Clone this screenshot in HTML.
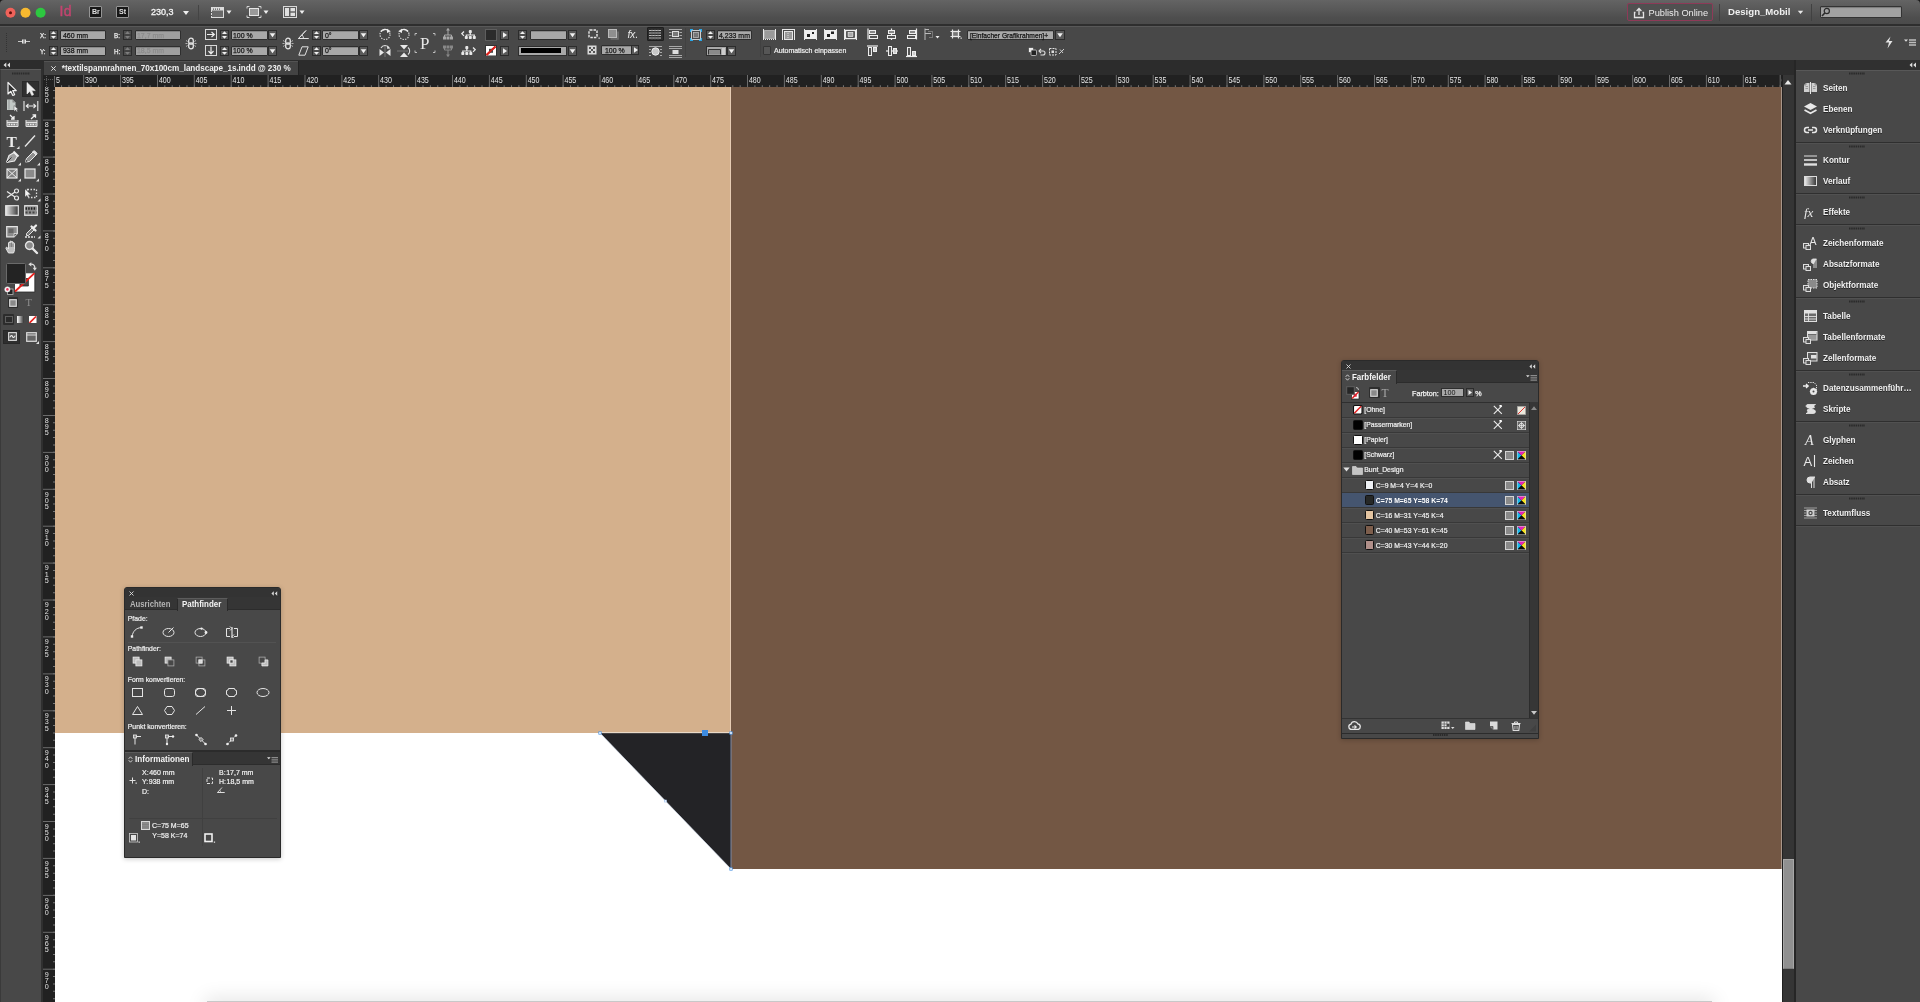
<!DOCTYPE html>
<html lang="de"><head><meta charset="utf-8"><title>InDesign</title>
<style>
html,body{margin:0;padding:0}
body{width:1920px;height:1002px;overflow:hidden;background:#fff;position:relative;font-family:"Liberation Sans",sans-serif;}
div,svg{position:absolute;box-sizing:border-box}
#root{left:0;top:0;width:1920px;height:1002px;will-change:transform}
.t{white-space:nowrap;line-height:1}
</style></head>
<body>
<div id="root">
<div style="left:55px;top:87px;width:676px;height:646px;background:#d4b08c"></div>
<div style="left:731px;top:87px;width:1050px;height:782px;background:#735744"></div>
<div style="left:730.2px;top:87px;width:0.9px;height:646px;background:#e6ccb4"></div>
<div style="left:1781px;top:87px;width:1px;height:782px;background:#a9968a"></div>
<svg style="left:590px;top:725px;" width="150" height="155" viewBox="0 0 150 155"><polygon points="10,8 141,8 141,144" fill="#232326"/><path d="M10 7.7H141" stroke="#f2e8de" stroke-width="0.9"/><path d="M141 8V144" stroke="#7d8aa6" stroke-width="1"/><line x1="10" y1="8" x2="141" y2="144" stroke="#dbe8f8" stroke-width="0.6"/><rect x="112" y="5" width="6" height="6" fill="#3d8be0"/><rect x="8.8" y="6.8" width="2.4" height="2.4" fill="#fff" stroke="#3d8be0" stroke-width="0.7"/><rect x="139.8" y="6.8" width="2.4" height="2.4" fill="#fff" stroke="#3d8be0" stroke-width="0.7"/><rect x="139.8" y="142.8" width="2.4" height="2.4" fill="#fff" stroke="#3d8be0" stroke-width="0.7"/><rect x="74.5" y="75" width="2" height="2" fill="#fff" stroke="#9dc0ee" stroke-width="0.6"/></svg>
<div style="left:207px;top:1001px;width:1505px;height:12px;background:#c8c8c8;box-shadow:0 0 20px 2px rgba(0,0,0,.12)"></div>
<div style="left:0px;top:58.5px;width:1920px;height:2px;background:#3c3c3c"></div>
<div style="left:0px;top:60.3px;width:1920px;height:15px;background:#2c2c2c"></div>
<div style="left:42px;top:75px;width:1740px;height:12.2px;background:#212121"></div>
<div style="left:42px;top:75px;width:13px;height:927px;background:#212121"></div>
<svg style="left:0;top:75px" width="1782" height="12" viewBox="0 0 1782 12"><defs><clipPath id="hc"><rect x="56" y="0" width="1726" height="12"/></clipPath></defs><path d="M31.57 11.2H1782" stroke="#787878" stroke-width="2" stroke-dasharray="1 6.376" clip-path="url(#hc)"/><path d="M83.7 0V12M120.6 0V12M157.5 0V12M194.3 0V12M231.2 0V12M268.1 0V12M305 0V12M341.9 0V12M378.7 0V12M415.6 0V12M452.5 0V12M489.4 0V12M526.3 0V12M563.1 0V12M600 0V12M636.9 0V12M673.8 0V12M710.7 0V12M747.5 0V12M784.4 0V12M821.3 0V12M858.2 0V12M895.1 0V12M931.9 0V12M968.8 0V12M1005.7 0V12M1042.6 0V12M1079.5 0V12M1116.3 0V12M1153.2 0V12M1190.1 0V12M1227 0V12M1263.9 0V12M1300.7 0V12M1337.6 0V12M1374.5 0V12M1411.4 0V12M1448.3 0V12M1485.1 0V12M1522 0V12M1558.9 0V12M1595.8 0V12M1632.7 0V12M1669.5 0V12M1706.4 0V12M1743.3 0V12M1780.2 0V12" stroke="#6c6c6c" stroke-width="1"/><g font-family="Liberation Sans, sans-serif" font-size="8.3" fill="#e4e4e4"><text x="85.1" y="8" textLength="11.8" lengthAdjust="spacingAndGlyphs">390</text><text x="122" y="8" textLength="11.8" lengthAdjust="spacingAndGlyphs">395</text><text x="158.9" y="8" textLength="11.8" lengthAdjust="spacingAndGlyphs">400</text><text x="195.7" y="8" textLength="11.8" lengthAdjust="spacingAndGlyphs">405</text><text x="232.6" y="8" textLength="11.8" lengthAdjust="spacingAndGlyphs">410</text><text x="269.5" y="8" textLength="11.8" lengthAdjust="spacingAndGlyphs">415</text><text x="306.4" y="8" textLength="11.8" lengthAdjust="spacingAndGlyphs">420</text><text x="343.3" y="8" textLength="11.8" lengthAdjust="spacingAndGlyphs">425</text><text x="380.1" y="8" textLength="11.8" lengthAdjust="spacingAndGlyphs">430</text><text x="417" y="8" textLength="11.8" lengthAdjust="spacingAndGlyphs">435</text><text x="453.9" y="8" textLength="11.8" lengthAdjust="spacingAndGlyphs">440</text><text x="490.8" y="8" textLength="11.8" lengthAdjust="spacingAndGlyphs">445</text><text x="527.7" y="8" textLength="11.8" lengthAdjust="spacingAndGlyphs">450</text><text x="564.5" y="8" textLength="11.8" lengthAdjust="spacingAndGlyphs">455</text><text x="601.4" y="8" textLength="11.8" lengthAdjust="spacingAndGlyphs">460</text><text x="638.3" y="8" textLength="11.8" lengthAdjust="spacingAndGlyphs">465</text><text x="675.2" y="8" textLength="11.8" lengthAdjust="spacingAndGlyphs">470</text><text x="712.1" y="8" textLength="11.8" lengthAdjust="spacingAndGlyphs">475</text><text x="748.9" y="8" textLength="11.8" lengthAdjust="spacingAndGlyphs">480</text><text x="785.8" y="8" textLength="11.8" lengthAdjust="spacingAndGlyphs">485</text><text x="822.7" y="8" textLength="11.8" lengthAdjust="spacingAndGlyphs">490</text><text x="859.6" y="8" textLength="11.8" lengthAdjust="spacingAndGlyphs">495</text><text x="896.5" y="8" textLength="11.8" lengthAdjust="spacingAndGlyphs">500</text><text x="933.3" y="8" textLength="11.8" lengthAdjust="spacingAndGlyphs">505</text><text x="970.2" y="8" textLength="11.8" lengthAdjust="spacingAndGlyphs">510</text><text x="1007.1" y="8" textLength="11.8" lengthAdjust="spacingAndGlyphs">515</text><text x="1044" y="8" textLength="11.8" lengthAdjust="spacingAndGlyphs">520</text><text x="1080.9" y="8" textLength="11.8" lengthAdjust="spacingAndGlyphs">525</text><text x="1117.7" y="8" textLength="11.8" lengthAdjust="spacingAndGlyphs">530</text><text x="1154.6" y="8" textLength="11.8" lengthAdjust="spacingAndGlyphs">535</text><text x="1191.5" y="8" textLength="11.8" lengthAdjust="spacingAndGlyphs">540</text><text x="1228.4" y="8" textLength="11.8" lengthAdjust="spacingAndGlyphs">545</text><text x="1265.3" y="8" textLength="11.8" lengthAdjust="spacingAndGlyphs">550</text><text x="1302.1" y="8" textLength="11.8" lengthAdjust="spacingAndGlyphs">555</text><text x="1339" y="8" textLength="11.8" lengthAdjust="spacingAndGlyphs">560</text><text x="1375.9" y="8" textLength="11.8" lengthAdjust="spacingAndGlyphs">565</text><text x="1412.8" y="8" textLength="11.8" lengthAdjust="spacingAndGlyphs">570</text><text x="1449.7" y="8" textLength="11.8" lengthAdjust="spacingAndGlyphs">575</text><text x="1486.5" y="8" textLength="11.8" lengthAdjust="spacingAndGlyphs">580</text><text x="1523.4" y="8" textLength="11.8" lengthAdjust="spacingAndGlyphs">585</text><text x="1560.3" y="8" textLength="11.8" lengthAdjust="spacingAndGlyphs">590</text><text x="1597.2" y="8" textLength="11.8" lengthAdjust="spacingAndGlyphs">595</text><text x="1634.1" y="8" textLength="11.8" lengthAdjust="spacingAndGlyphs">600</text><text x="1670.9" y="8" textLength="11.8" lengthAdjust="spacingAndGlyphs">605</text><text x="1707.8" y="8" textLength="11.8" lengthAdjust="spacingAndGlyphs">610</text><text x="1744.7" y="8" textLength="11.8" lengthAdjust="spacingAndGlyphs">615</text><text x="1781.6" y="8" textLength="11.8" lengthAdjust="spacingAndGlyphs">620</text><text x="48.2" y="8" textLength="11.8" lengthAdjust="spacingAndGlyphs" clip-path="url(#hc)">385</text></g></svg>
<svg style="left:42px;top:0" width="13" height="1002" viewBox="0 0 13 1002"><defs><clipPath id="vc"><rect x="0" y="87" width="13" height="915"/></clipPath></defs><g clip-path="url(#vc)"><path d="M12 67.95V1002" stroke="#787878" stroke-width="2" stroke-dasharray="1 6.383"/><path d="M0 83.2H13M0 120.1H13M0 157.1H13M0 194H13M0 230.9H13M0 267.8H13M0 304.7H13M0 341.6H13M0 378.5H13M0 415.5H13M0 452.4H13M0 489.3H13M0 526.2H13M0 563.1H13M0 600H13M0 636.9H13M0 673.9H13M0 710.8H13M0 747.7H13M0 784.6H13M0 821.5H13M0 858.4H13M0 895.4H13M0 932.3H13M0 969.2H13" stroke="#6c6c6c" stroke-width="1"/><g font-family="Liberation Sans, sans-serif" font-size="7.2" fill="#e0e0e0" text-anchor="middle"><text x="4.8 4.8 4.8" y="90.5 96.8 103">850</text><text x="4.8 4.8 4.8" y="127.4 133.7 139.9">855</text><text x="4.8 4.8 4.8" y="164.4 170.6 176.9">860</text><text x="4.8 4.8 4.8" y="201.3 207.5 213.8">865</text><text x="4.8 4.8 4.8" y="238.2 244.4 250.7">870</text><text x="4.8 4.8 4.8" y="275.1 281.3 287.6">875</text><text x="4.8 4.8 4.8" y="312 318.3 324.5">880</text><text x="4.8 4.8 4.8" y="348.9 355.2 361.4">885</text><text x="4.8 4.8 4.8" y="385.8 392.1 398.3">890</text><text x="4.8 4.8 4.8" y="422.8 429 435.3">895</text><text x="4.8 4.8 4.8" y="459.7 465.9 472.2">900</text><text x="4.8 4.8 4.8" y="496.6 502.8 509.1">905</text><text x="4.8 4.8 4.8" y="533.5 539.8 546">910</text><text x="4.8 4.8 4.8" y="570.4 576.7 582.9">915</text><text x="4.8 4.8 4.8" y="607.3 613.6 619.8">920</text><text x="4.8 4.8 4.8" y="644.2 650.5 656.7">925</text><text x="4.8 4.8 4.8" y="681.2 687.4 693.7">930</text><text x="4.8 4.8 4.8" y="718.1 724.3 730.6">935</text><text x="4.8 4.8 4.8" y="755 761.2 767.5">940</text><text x="4.8 4.8 4.8" y="791.9 798.2 804.4">945</text><text x="4.8 4.8 4.8" y="828.8 835.1 841.3">950</text><text x="4.8 4.8 4.8" y="865.7 872 878.2">955</text><text x="4.8 4.8 4.8" y="902.6 908.9 915.1">960</text><text x="4.8 4.8 4.8" y="939.6 945.8 952.1">965</text><text x="4.8 4.8 4.8" y="976.5 982.7 989">970</text></g></g></svg>
<div style="left:42px;top:75px;width:13px;height:12px;background:#212121"></div>
<svg style="left:42px;top:75.5px;" width="13" height="11" viewBox="0 0 13 11"><path d="M4.5 0V11M0 3.5H13" stroke="#5c5c5c" stroke-width="1" stroke-dasharray="1 1" fill="none"/><path d="M12.5 0V11" stroke="#6a6a6a" stroke-width="1"/></svg>
<div style="left:1782px;top:75px;width:12px;height:927px;background:#353535;border-left:1px solid #202020"></div>
<div style="left:1783px;top:859px;width:10.5px;height:110px;background:#909090;border:1px solid #a8a8a8;border-bottom-color:#7a7a7a"></div>
<svg style="left:1782px;top:76px;" width="12" height="12" viewBox="0 0 12 12"><polygon points="2.5,8.5 6,4 9.5,8.5" fill="#e8e8e8"/></svg>
<div style="left:1793.5px;top:60px;width:2.5px;height:942px;background:#262626"></div>
<div style="left:0px;top:0px;width:1920px;height:24.5px;background:linear-gradient(#646464 0,#606060 12%,#585858 40%,#4e4e4e 70%,#4a4a4a 100%)"></div>
<div style="left:0px;top:24.3px;width:1920px;height:1.5px;background:#2e2e2e"></div>
<svg style="left:0px;top:0px;" width="4" height="4" viewBox="0 0 4 4"><path d="M0 0H4A4 4 0 0 0 0 4Z" fill="#1a1a1a"/></svg>
<svg style="left:1916px;top:0px;" width="4" height="4" viewBox="0 0 4 4"><path d="M4 0H0A4 4 0 0 1 4 4Z" fill="#1a1a1a"/></svg>
<svg style="left:4px;top:6px;" width="44" height="14" viewBox="0 0 44 14"><circle cx="6.5" cy="6.7" r="5" fill="#f0625a"/><circle cx="6.5" cy="6.7" r="1.5" fill="#5c0e0a"/><circle cx="21.5" cy="6.7" r="5" fill="#f7b92f"/><circle cx="36.6" cy="6.7" r="5" fill="#2dc840"/></svg>
<div class="t" style="left:59.5px;top:3.5px;font-size:14px;color:#c2456f;letter-spacing:0.3px;-webkit-text-stroke:0.45px #c2456f">Id</div>
<div style="left:89px;top:6px;width:13px;height:12px;background:#171717;border:1px solid #959595;border-radius:1px"><div class="t" style="left:2.2px;top:1.3px;font-size:8px;font-weight:bold;color:#e0e0e0;transform:scaleX(.88);transform-origin:0 0">Br</div></div>
<div style="left:116px;top:6px;width:13px;height:12px;background:#171717;border:1px solid #959595;border-radius:1px"><div class="t" style="left:2.2px;top:1.3px;font-size:8px;font-weight:bold;color:#e0e0e0;transform:scaleX(.88);transform-origin:0 0">St</div></div>
<div class="t" style="left:151px;top:7.6px;font-size:9.3px;color:#f4f4f4;-webkit-text-stroke:0.3px #f4f4f4;transform:scaleX(.97);transform-origin:0 0">230,3</div>
<svg style="left:182px;top:10px;" width="8" height="6" viewBox="0 0 8 6"><polygon points="1,1 7,1 4,5" fill="#f0f0f0"/></svg>
<div style="left:198px;top:5px;width:1px;height:15px;background:#444"></div>
<svg style="left:210px;top:5px;" width="24" height="14" viewBox="0 0 24 14"><rect x="1.5" y="2.5" width="12" height="10" fill="#6a6a6a" stroke="#dcdcdc"/><rect x="2" y="3" width="11" height="2.5" fill="#dcdcdc"/><path d="M3 4.2h1M5 4.2h1M7 4.2h1M9 4.2h1" stroke="#555" stroke-width="1.2"/><path d="M1.5 7v1M1.5 10v1" stroke="#555"/><polygon points="16.5,5.5 21.5,5.5 19,9" fill="#f0f0f0"/></svg>
<svg style="left:246px;top:5px;" width="24" height="14" viewBox="0 0 24 14"><rect x="3.5" y="3.5" width="9" height="7" fill="#9a9a9a" stroke="#e4e4e4"/><path d="M1 3.5V1.5H3.5M12.5 1.5H15V3.5M15 10.5V12.5H12.5M3.5 12.5H1V10.5" stroke="#d4d4d4" fill="none"/><polygon points="17.5,5.5 22.5,5.5 20,9" fill="#f0f0f0"/></svg>
<svg style="left:282px;top:5px;" width="24" height="14" viewBox="0 0 24 14"><rect x="1.5" y="1.5" width="13" height="11" fill="#5c5c5c" stroke="#d8d8d8"/><rect x="3" y="3" width="4" height="8" fill="#e0e0e0"/><rect x="8.5" y="3" width="4.5" height="3.3" fill="#e0e0e0"/><rect x="8.5" y="7.7" width="4.5" height="3.3" fill="#e0e0e0"/><polygon points="17.5,5.5 22.5,5.5 20,9" fill="#f0f0f0"/></svg>
<div style="left:1627px;top:3px;width:86px;height:18px;border:1px solid #8e3a58;border-radius:2px;background:#505050"></div>
<svg style="left:1633px;top:6.5px;" width="12" height="12" viewBox="0 0 12 12"><path d="M2.5 5.5H1.5V10.5H10.5V5.5H9.5" fill="none" stroke="#e4e4e4" stroke-width="1.3"/><path d="M6 8V2M3.6 4L6 1.5L8.4 4" fill="none" stroke="#e4e4e4" stroke-width="1.3"/></svg>
<div class="t" style="left:1648.5px;top:8.6px;font-size:9.25px;color:#ececec;">Publish Online</div>
<div style="left:1719px;top:4px;width:1px;height:17px;background:#414141"></div>
<div class="t" style="left:1728px;top:7.3px;font-size:9.6px;color:#f0f0f0;font-weight:bold;letter-spacing:0px">Design_Mobil</div>
<svg style="left:1797px;top:10px;" width="7" height="5" viewBox="0 0 7 5"><polygon points="0.8,0.8 6.2,0.8 3.5,4" fill="#e8e8e8"/></svg>
<div style="left:1811px;top:4px;width:1px;height:17px;background:#414141"></div>
<div style="left:1820px;top:6px;width:82px;height:12px;background:#a2a2a2;border:1px solid #333;border-radius:1px;box-shadow:inset 0 1px 1px rgba(0,0,0,.25)"></div>
<svg style="left:1820px;top:6px;" width="12" height="12" viewBox="0 0 12 12"><circle cx="6.8" cy="5" r="2.6" fill="none" stroke="#2a2a2a" stroke-width="1.2"/><path d="M4.8 7L2 10" stroke="#2a2a2a" stroke-width="1.6"/></svg>
<div style="left:0px;top:25.8px;width:1920px;height:34.2px;background:#484848;border-top:1px solid #585858"></div>
<svg style="left:5px;top:33px;" width="4" height="20" viewBox="0 0 4 20"><path d="M1.5 0V20" stroke="#333" stroke-dasharray="1 1"/></svg>
<svg style="left:18px;top:37px;" width="12" height="9" viewBox="0 0 12 9"><path d="M0 4.5H12" stroke="#c8c8c8" stroke-width="1"/><rect x="4" y="2.5" width="4" height="4" fill="#e8e8e8"/><rect x="5.5" y="2.5" width="1" height="4" fill="#555"/></svg>
<div class="t" style="left:40.3px;top:32.2px;font-size:7.4px;color:#eee;-webkit-text-stroke:0.25px #eee;transform:scaleX(.85);transform-origin:0 0">X:</div>
<svg style="left:49px;top:30px;" width="9" height="10" viewBox="0 0 9 10"><rect x="0.5" y="0.5" width="8" height="9" fill="#5a5a5a" stroke="#2c2c2c"/><polygon points="2,4 4.5,1.3 7,4" fill="#f0f0f0"/><polygon points="2,6 4.5,8.7 7,6" fill="#f0f0f0"/><line x1="1" y1="5" x2="8" y2="5" stroke="#333" stroke-width="0.8"/></svg>
<div style="left:60px;top:30px;width:46px;height:10px;background:#a8a8a8;border:1px solid #2e2e2e;border-radius:1px;box-shadow:inset 0 1px 0 rgba(0,0,0,.18)"><div class="t" style="left:1.5px;top:0.9px;font-size:8px;color:#141414;-webkit-text-stroke:0.25px #141414;transform:scaleX(0.87);transform-origin:0 0">460 mm</div></div>
<div class="t" style="left:114.3px;top:32.2px;font-size:7.4px;color:#eee;-webkit-text-stroke:0.25px #eee;transform:scaleX(.85);transform-origin:0 0">B:</div>
<svg style="left:123px;top:30px;" width="9" height="10" viewBox="0 0 9 10"><rect x="0.5" y="0.5" width="8" height="9" fill="#4e4e4e" stroke="#2c2c2c"/><polygon points="2,4 4.5,1.3 7,4" fill="#7d7d7d"/><polygon points="2,6 4.5,8.7 7,6" fill="#7d7d7d"/><line x1="1" y1="5" x2="8" y2="5" stroke="#333" stroke-width="0.8"/></svg>
<div style="left:134.5px;top:30px;width:46px;height:10px;background:#9f9f9f;border:1px solid #2e2e2e;border-radius:1px;box-shadow:inset 0 1px 0 rgba(0,0,0,.18)"><div class="t" style="left:1.5px;top:0.9px;font-size:8px;color:#8b8b8b;-webkit-text-stroke:0.25px #8b8b8b;transform:scaleX(0.87);transform-origin:0 0">17,7 mm</div></div>
<div class="t" style="left:40.3px;top:47.7px;font-size:7.4px;color:#eee;-webkit-text-stroke:0.25px #eee;transform:scaleX(.85);transform-origin:0 0">Y:</div>
<svg style="left:49px;top:45.5px;" width="9" height="10" viewBox="0 0 9 10"><rect x="0.5" y="0.5" width="8" height="9" fill="#5a5a5a" stroke="#2c2c2c"/><polygon points="2,4 4.5,1.3 7,4" fill="#f0f0f0"/><polygon points="2,6 4.5,8.7 7,6" fill="#f0f0f0"/><line x1="1" y1="5" x2="8" y2="5" stroke="#333" stroke-width="0.8"/></svg>
<div style="left:60px;top:45.5px;width:46px;height:10px;background:#a8a8a8;border:1px solid #2e2e2e;border-radius:1px;box-shadow:inset 0 1px 0 rgba(0,0,0,.18)"><div class="t" style="left:1.5px;top:0.9px;font-size:8px;color:#141414;-webkit-text-stroke:0.25px #141414;transform:scaleX(0.87);transform-origin:0 0">938 mm</div></div>
<div class="t" style="left:114.3px;top:47.7px;font-size:7.4px;color:#eee;-webkit-text-stroke:0.25px #eee;transform:scaleX(.85);transform-origin:0 0">H:</div>
<svg style="left:123px;top:45.5px;" width="9" height="10" viewBox="0 0 9 10"><rect x="0.5" y="0.5" width="8" height="9" fill="#4e4e4e" stroke="#2c2c2c"/><polygon points="2,4 4.5,1.3 7,4" fill="#7d7d7d"/><polygon points="2,6 4.5,8.7 7,6" fill="#7d7d7d"/><line x1="1" y1="5" x2="8" y2="5" stroke="#333" stroke-width="0.8"/></svg>
<div style="left:134.5px;top:45.5px;width:46px;height:10px;background:#9f9f9f;border:1px solid #2e2e2e;border-radius:1px;box-shadow:inset 0 1px 0 rgba(0,0,0,.18)"><div class="t" style="left:1.5px;top:0.9px;font-size:8px;color:#8b8b8b;-webkit-text-stroke:0.25px #8b8b8b;transform:scaleX(0.87);transform-origin:0 0">18,5 mm</div></div>
<svg style="left:185px;top:37px;" width="12" height="13" viewBox="0 0 12 13"><rect x="3.7" y="1.2" width="4.6" height="6" rx="2.3" fill="none" stroke="#e6e6e6" stroke-width="1.3"/><rect x="3.7" y="5.8" width="4.6" height="6" rx="2.3" fill="none" stroke="#e6e6e6" stroke-width="1.3"/><path d="M0.5 6.5H2.5M9.5 6.5H11.5M1 3.5L2.6 4.5M11 3.5L9.4 4.5M1 9.5L2.6 8.5M11 9.5L9.4 8.5" stroke="#cfcfcf" stroke-width="0.8"/></svg>
<svg style="left:282px;top:37px;" width="12" height="13" viewBox="0 0 12 13"><rect x="3.7" y="1.2" width="4.6" height="6" rx="2.3" fill="none" stroke="#e6e6e6" stroke-width="1.3"/><rect x="3.7" y="5.8" width="4.6" height="6" rx="2.3" fill="none" stroke="#e6e6e6" stroke-width="1.3"/><path d="M0.5 6.5H2.5M9.5 6.5H11.5M1 3.5L2.6 4.5M11 3.5L9.4 4.5M1 9.5L2.6 8.5M11 9.5L9.4 8.5" stroke="#cfcfcf" stroke-width="0.8"/></svg>
<svg style="left:205px;top:28.5px;" width="12" height="11" viewBox="0 0 12 11"><rect x="0.5" y="0.5" width="11" height="10" fill="none" stroke="#d8d8d8"/><path d="M2 5.5H9M6.5 3L9.3 5.5L6.5 8" fill="none" stroke="#eee" stroke-width="1.2"/></svg>
<svg style="left:205px;top:44.5px;" width="12" height="11" viewBox="0 0 12 11"><rect x="0.5" y="0.5" width="11" height="10" fill="none" stroke="#d8d8d8"/><path d="M6 1.5V8.5M3.5 6L6 8.8L8.5 6" fill="none" stroke="#eee" stroke-width="1.2"/></svg>
<svg style="left:219.5px;top:30px;" width="9" height="10" viewBox="0 0 9 10"><rect x="0.5" y="0.5" width="8" height="9" fill="#5a5a5a" stroke="#2c2c2c"/><polygon points="2,4 4.5,1.3 7,4" fill="#f0f0f0"/><polygon points="2,6 4.5,8.7 7,6" fill="#f0f0f0"/><line x1="1" y1="5" x2="8" y2="5" stroke="#333" stroke-width="0.8"/></svg>
<div style="left:230.5px;top:30px;width:37px;height:10px;background:#a8a8a8;border:1px solid #2e2e2e;border-radius:1px;box-shadow:inset 0 1px 0 rgba(0,0,0,.18)"><div class="t" style="left:1.5px;top:0.9px;font-size:8px;color:#141414;-webkit-text-stroke:0.25px #141414;transform:scaleX(0.87);transform-origin:0 0">100 %</div></div>
<svg style="left:268px;top:30px;" width="9" height="10" viewBox="0 0 9 10"><rect x="0.5" y="0.5" width="8" height="9" fill="#5a5a5a" stroke="#2c2c2c"/><polygon points="1.7000000000000002,3.3 7.3,3.3 4.5,7.2" fill="#f2f2f2"/></svg>
<svg style="left:219.5px;top:45.5px;" width="9" height="10" viewBox="0 0 9 10"><rect x="0.5" y="0.5" width="8" height="9" fill="#5a5a5a" stroke="#2c2c2c"/><polygon points="2,4 4.5,1.3 7,4" fill="#f0f0f0"/><polygon points="2,6 4.5,8.7 7,6" fill="#f0f0f0"/><line x1="1" y1="5" x2="8" y2="5" stroke="#333" stroke-width="0.8"/></svg>
<div style="left:230.5px;top:45.5px;width:37px;height:10px;background:#a8a8a8;border:1px solid #2e2e2e;border-radius:1px;box-shadow:inset 0 1px 0 rgba(0,0,0,.18)"><div class="t" style="left:1.5px;top:0.9px;font-size:8px;color:#141414;-webkit-text-stroke:0.25px #141414;transform:scaleX(0.87);transform-origin:0 0">100 %</div></div>
<svg style="left:268px;top:45.5px;" width="9" height="10" viewBox="0 0 9 10"><rect x="0.5" y="0.5" width="8" height="9" fill="#5a5a5a" stroke="#2c2c2c"/><polygon points="1.7000000000000002,3.3 7.3,3.3 4.5,7.2" fill="#f2f2f2"/></svg>
<svg style="left:298px;top:29px;" width="11" height="11" viewBox="0 0 11 11"><path d="M0.5 9.5H10.5L0.5 9.5L8 1.5" fill="none" stroke="#e0e0e0" stroke-width="1"/><path d="M0.5 9.5L8 1.5" stroke="#e0e0e0"/><path d="M5.5 9.5A5 5 0 0 0 4 6" fill="none" stroke="#e0e0e0"/></svg>
<svg style="left:298px;top:45.5px;" width="11" height="10" viewBox="0 0 11 10"><path d="M0.8 9.2L4 0.8H10.2L7 9.2Z" fill="none" stroke="#e0e0e0" stroke-width="1"/></svg>
<svg style="left:311.5px;top:30px;" width="9" height="10" viewBox="0 0 9 10"><rect x="0.5" y="0.5" width="8" height="9" fill="#5a5a5a" stroke="#2c2c2c"/><polygon points="2,4 4.5,1.3 7,4" fill="#f0f0f0"/><polygon points="2,6 4.5,8.7 7,6" fill="#f0f0f0"/><line x1="1" y1="5" x2="8" y2="5" stroke="#333" stroke-width="0.8"/></svg>
<div style="left:322px;top:30px;width:37px;height:10px;background:#a8a8a8;border:1px solid #2e2e2e;border-radius:1px;box-shadow:inset 0 1px 0 rgba(0,0,0,.18)"><div class="t" style="left:1.5px;top:0.9px;font-size:8px;color:#141414;-webkit-text-stroke:0.25px #141414;transform:scaleX(0.87);transform-origin:0 0">0°</div></div>
<svg style="left:359px;top:30px;" width="9" height="10" viewBox="0 0 9 10"><rect x="0.5" y="0.5" width="8" height="9" fill="#5a5a5a" stroke="#2c2c2c"/><polygon points="1.7000000000000002,3.3 7.3,3.3 4.5,7.2" fill="#f2f2f2"/></svg>
<svg style="left:311.5px;top:45.5px;" width="9" height="10" viewBox="0 0 9 10"><rect x="0.5" y="0.5" width="8" height="9" fill="#5a5a5a" stroke="#2c2c2c"/><polygon points="2,4 4.5,1.3 7,4" fill="#f0f0f0"/><polygon points="2,6 4.5,8.7 7,6" fill="#f0f0f0"/><line x1="1" y1="5" x2="8" y2="5" stroke="#333" stroke-width="0.8"/></svg>
<div style="left:322px;top:45.5px;width:37px;height:10px;background:#a8a8a8;border:1px solid #2e2e2e;border-radius:1px;box-shadow:inset 0 1px 0 rgba(0,0,0,.18)"><div class="t" style="left:1.5px;top:0.9px;font-size:8px;color:#141414;-webkit-text-stroke:0.25px #141414;transform:scaleX(0.87);transform-origin:0 0">0°</div></div>
<svg style="left:359px;top:45.5px;" width="9" height="10" viewBox="0 0 9 10"><rect x="0.5" y="0.5" width="8" height="9" fill="#5a5a5a" stroke="#2c2c2c"/><polygon points="1.7000000000000002,3.3 7.3,3.3 4.5,7.2" fill="#f2f2f2"/></svg>
<svg style="left:378px;top:28px;" width="14" height="13" viewBox="0 0 14 13"><circle cx="7" cy="6.5" r="5" fill="none" stroke="#d8d8d8" stroke-width="1.2" stroke-dasharray="1.3 1.3"/><path d="M3 3.5A5 5 0 0 1 10.5 2.8" fill="none" stroke="#eee" stroke-width="1.4"/><polygon points="9,0.8 12.8,3.3 9,5" fill="#eee"/></svg>
<svg style="left:397px;top:28px;" width="14" height="13" viewBox="0 0 14 13"><circle cx="7" cy="6.5" r="5" fill="none" stroke="#d8d8d8" stroke-width="1.2" stroke-dasharray="1.3 1.3"/><path d="M11 3.5A5 5 0 0 0 3.5 2.8" fill="none" stroke="#eee" stroke-width="1.4"/><polygon points="5,0.8 1.2,3.3 5,5" fill="#eee"/></svg>
<svg style="left:378px;top:44px;" width="14" height="13" viewBox="0 0 14 13"><path d="M7 1.5V12.5" stroke="#c0c0c0" stroke-width="0.8" stroke-dasharray="1 1"/><polygon points="1.5,5 6,8.5 1.5,12" fill="#e8e8e8"/><polygon points="12.5,5 8,8.5 12.5,12" fill="#e8e8e8"/><path d="M3 4A4.5 4.5 0 0 1 11 4" fill="none" stroke="#e0e0e0" stroke-width="1.1"/><polygon points="9.5,1.5 12.3,4.5 9,4.8" fill="#e8e8e8"/></svg>
<svg style="left:397px;top:44px;" width="14" height="13" viewBox="0 0 14 13"><path d="M0.5 7H11" stroke="#c0c0c0" stroke-width="0.8" stroke-dasharray="1 1"/><polygon points="3,1 7,5.5 11,1" fill="#e8e8e8"/><polygon points="3,13 7,8.5 11,13" fill="#e8e8e8"/><path d="M11 3.5A4.5 4.5 0 0 1 11 10.5" fill="none" stroke="#e0e0e0" stroke-width="1.1"/></svg>
<svg style="left:414px;top:31px;" width="22" height="24" viewBox="0 0 22 24"><path d="M1 4.5V2.5H3M19 2.5H21V4.5M21 19.5V21.5H19M3 21.5H1V19.5" fill="none" stroke="#bdbdbd" stroke-width="1"/><text x="6" y="17.5" font-family="Liberation Serif, serif" font-size="17" fill="#e8e8e8">P</text></svg>
<svg style="left:442px;top:28px;" width="12" height="13" viewBox="0 0 12 13"><path d="M6 0.5V5M2.5 10V7H9.5V10M6 5V7" fill="none" stroke="#a8a8a8" stroke-width="1"/><polygon points="4,2.5 6,0 8,2.5" fill="#a8a8a8"/><rect x="1" y="8.5" width="3" height="3" fill="#a8a8a8"/><rect x="4.5" y="8.5" width="3" height="3" fill="#a8a8a8"/><rect x="8" y="8.5" width="3" height="3" fill="#a8a8a8"/></svg>
<svg style="left:442px;top:44px;" width="12" height="13" viewBox="0 0 12 13"><g transform="translate(0,13) scale(1,-1)"><path d="M6 0.5V5M2.5 10V7H9.5V10M6 5V7" fill="none" stroke="#888" stroke-width="1"/><polygon points="4,2.5 6,0 8,2.5" fill="#888"/><rect x="1" y="8.5" width="3" height="3" fill="#888"/><rect x="4.5" y="8.5" width="3" height="3" fill="#888"/><rect x="8" y="8.5" width="3" height="3" fill="#888"/></g></svg>
<svg style="left:461px;top:28.5px;" width="15" height="11" viewBox="0 0 15 11"><g transform="translate(3.8,0.5)"><rect x="4" y="0.5" width="3" height="3.2" rx="1" fill="#e8e8e8"/><path d="M5.5 3.5V5.5M1.5 8V5.5H9.5V8" fill="none" stroke="#e8e8e8" stroke-width="1.2"/><rect x="0" y="6.5" width="3" height="3" rx="0.8" fill="#e8e8e8"/><rect x="4" y="6.5" width="3" height="3" rx="0.8" fill="#e8e8e8"/><rect x="8" y="6.5" width="3" height="3" rx="0.8" fill="#e8e8e8"/></g><path d="M3 2.5L0.8 4.7L3 6.9" fill="none" stroke="#e8e8e8" stroke-width="1.3"/></svg>
<svg style="left:461px;top:45px;" width="15" height="11" viewBox="0 0 15 11"><g transform="translate(0.3,0.5)"><rect x="4" y="0.5" width="3" height="3.2" rx="1" fill="#e8e8e8"/><path d="M5.5 3.5V5.5M1.5 8V5.5H9.5V8" fill="none" stroke="#e8e8e8" stroke-width="1.2"/><rect x="0" y="6.5" width="3" height="3" rx="0.8" fill="#e8e8e8"/><rect x="4" y="6.5" width="3" height="3" rx="0.8" fill="#e8e8e8"/><rect x="8" y="6.5" width="3" height="3" rx="0.8" fill="#e8e8e8"/></g><path d="M12 2.5L14.2 4.7L12 6.9" fill="none" stroke="#e8e8e8" stroke-width="1.3"/></svg>
<div style="left:485px;top:29px;width:12px;height:11.5px;background:#2b2b2b;border:1px solid #5e5e5e"></div>
<svg style="left:500px;top:30px;" width="9" height="10" viewBox="0 0 9 10"><rect x="0.5" y="0.5" width="8" height="9" fill="#5a5a5a" stroke="#2c2c2c"/><polygon points="3,2.3 3,7.7 7,5" fill="#f2f2f2"/></svg>
<svg style="left:485px;top:44.5px;" width="12" height="11.5" viewBox="0 0 12 11.5"><rect x="0.5" y="0.5" width="11" height="10.5" fill="#fff" stroke="#333"/><path d="M1.5 10L10.5 1.5" stroke="#e0221c" stroke-width="2.2"/><rect x="4" y="3.8" width="4" height="4" fill="#4a4a4a"/><path d="M1.5 10L10.5 1.5" stroke="#e0221c" stroke-width="1.6"/></svg>
<svg style="left:500px;top:45.5px;" width="9" height="10" viewBox="0 0 9 10"><rect x="0.5" y="0.5" width="8" height="9" fill="#5a5a5a" stroke="#2c2c2c"/><polygon points="3,2.3 3,7.7 7,5" fill="#f2f2f2"/></svg>
<svg style="left:518px;top:30px;" width="9" height="10" viewBox="0 0 9 10"><rect x="0.5" y="0.5" width="8" height="9" fill="#5a5a5a" stroke="#2c2c2c"/><polygon points="2,4 4.5,1.3 7,4" fill="#f0f0f0"/><polygon points="2,6 4.5,8.7 7,6" fill="#f0f0f0"/><line x1="1" y1="5" x2="8" y2="5" stroke="#333" stroke-width="0.8"/></svg>
<div style="left:529.5px;top:30px;width:37px;height:10px;background:#a8a8a8;border:1px solid #2e2e2e;border-radius:1px;box-shadow:inset 0 1px 0 rgba(0,0,0,.18)"><div class="t" style="left:1.5px;top:0.9px;font-size:8px;color:#141414;-webkit-text-stroke:0.25px #141414;transform:scaleX(0.87);transform-origin:0 0"></div></div>
<svg style="left:567.5px;top:30px;" width="9" height="10" viewBox="0 0 9 10"><rect x="0.5" y="0.5" width="8" height="9" fill="#5a5a5a" stroke="#2c2c2c"/><polygon points="1.7000000000000002,3.3 7.3,3.3 4.5,7.2" fill="#f2f2f2"/></svg>
<div style="left:518px;top:45.5px;width:49px;height:10px;background:#a8a8a8;border:1px solid #2e2e2e"><div style="left:1.5px;top:1.5px;width:40px;height:5px;background:#000"></div></div>
<svg style="left:567.5px;top:45.5px;" width="9" height="10" viewBox="0 0 9 10"><rect x="0.5" y="0.5" width="8" height="9" fill="#5a5a5a" stroke="#2c2c2c"/><polygon points="1.7000000000000002,3.3 7.3,3.3 4.5,7.2" fill="#f2f2f2"/></svg>
<svg style="left:587px;top:28px;" width="14" height="13" viewBox="0 0 14 13"><rect x="2" y="2" width="8" height="7.5" rx="1" fill="none" stroke="#e8e8e8" stroke-width="1.4" stroke-dasharray="2.5 1"/><rect x="11.5" y="9.5" width="1.3" height="1.3" fill="#ddd"/></svg>
<svg style="left:607px;top:28px;" width="13" height="13" viewBox="0 0 13 13"><rect x="1.5" y="1.5" width="8" height="8" fill="#8f8f8f" stroke="#bbb"/><path d="M11 3.5V11H3.5" fill="none" stroke="#6e6e6e" stroke-width="1.6"/></svg>
<div class="t" style="left:627.5px;top:28.6px;font-size:10.5px;color:#e8e8e8;letter-spacing:-0.3px"><i>fx</i>.</div>
<svg style="left:587px;top:45px;" width="10" height="10" viewBox="0 0 10 10"><rect x="0.5" y="0.5" width="9" height="9" fill="#d8d8d8"/><rect x="2" y="2" width="2" height="2" fill="#555"/><rect x="6" y="2" width="2" height="2" fill="#555"/><rect x="4" y="4" width="2" height="2" fill="#555"/><rect x="2" y="6" width="2" height="2" fill="#555"/><rect x="6" y="6" width="2" height="2" fill="#555"/></svg>
<div style="left:600.5px;top:45px;width:31px;height:10px;background:#a8a8a8;border:1px solid #2e2e2e;border-radius:1px;box-shadow:inset 0 1px 0 rgba(0,0,0,.18)"><div class="t" style="left:3px;top:0.9px;font-size:8px;color:#141414;-webkit-text-stroke:0.25px #141414;transform:scaleX(0.87);transform-origin:0 0">100 %</div></div>
<svg style="left:631px;top:45px;" width="8" height="10" viewBox="0 0 8 10"><rect x="0.5" y="0.5" width="7" height="9" fill="#5a5a5a" stroke="#2c2c2c"/><polygon points="3,2.3 3,7.7 7,5" fill="#f2f2f2"/></svg>
<div style="left:646.5px;top:27px;width:17px;height:14px;background:#2c2c2c;border:1px solid #1e1e1e;border-radius:1px"></div>
<svg style="left:649px;top:28.5px;" width="12" height="11" viewBox="0 0 12 11"><path d="M0 1.5H12M0 4H12M0 6.5H12M0 9H12" stroke="#bdbdbd" stroke-width="1.2"/><path d="M3 0V11M6 0V11M9 0V11" stroke="#555" stroke-width="0.6"/></svg>
<svg style="left:668.5px;top:28px;" width="13" height="12" viewBox="0 0 13 12"><path d="M0 1.5H13M0 4.5H2.5M10.5 4.5H13M0 7.5H2.5M10.5 7.5H13M0 10.5H13" stroke="#a8a8a8" stroke-width="1"/><rect x="3.5" y="3.5" width="6" height="5" fill="#777" stroke="#ddd"/></svg>
<svg style="left:649px;top:44.5px;" width="13" height="13" viewBox="0 0 13 13"><path d="M0 1.5H13M0 4.5H2M11 4.5H13M0 7.5H2M11 7.5H13M0 10.5H2M11 10.5H13" stroke="#a8a8a8" stroke-width="1"/><circle cx="6.5" cy="6.5" r="3.7" fill="#c8c8c8" stroke="#eee"/></svg>
<svg style="left:668.5px;top:44.5px;" width="13" height="13" viewBox="0 0 13 13"><path d="M0 1.5H13M0 3.5H13M0 10.5H13M0 12.5H13" stroke="#a8a8a8" stroke-width="1"/><rect x="3.5" y="5" width="6" height="4" fill="#ddd"/></svg>
<div style="left:685px;top:28px;width:1px;height:29px;background:#414141"></div>
<svg style="left:689.5px;top:28.5px;" width="12" height="12" viewBox="0 0 12 12"><rect x="1.5" y="1.5" width="9" height="9" fill="none" stroke="#cfcfcf" stroke-width="1"/><rect x="3.5" y="3.5" width="5" height="5" fill="#777" stroke="#b8b8b8" stroke-width="0.8"/><path d="M0.5 3V0.5H3M9 0.5H11.5V3M11.5 9V11.5H9M3 11.5H0.5V9" fill="none" stroke="#2aa7e8" stroke-width="1.3"/></svg>
<svg style="left:706px;top:30px;" width="9" height="10" viewBox="0 0 9 10"><rect x="0.5" y="0.5" width="8" height="9" fill="#5a5a5a" stroke="#2c2c2c"/><polygon points="2,4 4.5,1.3 7,4" fill="#f0f0f0"/><polygon points="2,6 4.5,8.7 7,6" fill="#f0f0f0"/><line x1="1" y1="5" x2="8" y2="5" stroke="#333" stroke-width="0.8"/></svg>
<div style="left:717px;top:30px;width:35px;height:10px;background:#a8a8a8;border:1px solid #2e2e2e;border-radius:1px;box-shadow:inset 0 1px 0 rgba(0,0,0,.18)"><div class="t" style="left:1.2px;top:0.9px;font-size:8px;color:#141414;-webkit-text-stroke:0.25px #141414;transform:scaleX(0.87);transform-origin:0 0">4,233 mm</div></div>
<div style="left:706px;top:45.5px;width:20.5px;height:10px;background:#a8a8a8;border:1px solid #2e2e2e"><svg style="left:1px;top:1px" width="17" height="7" viewBox="0 0 17 7"><path d="M0.5 6.5V1.5H12.5V6.5" fill="#8a8a8a" stroke="#333"/><rect x="14" y="0" width="3" height="7" fill="#ccc"/></svg></div>
<svg style="left:726.5px;top:45.5px;" width="9" height="10" viewBox="0 0 9 10"><rect x="0.5" y="0.5" width="8" height="9" fill="#5a5a5a" stroke="#2c2c2c"/><polygon points="1.7000000000000002,3.3 7.3,3.3 4.5,7.2" fill="#f2f2f2"/></svg>
<div style="left:759.5px;top:28px;width:1px;height:29px;background:#414141"></div>
<svg style="left:762.5px;top:28px;" width="13" height="13" viewBox="0 0 13 13"><rect x="1.5" y="2.5" width="10" height="8" fill="#9a9a9a" stroke="#e8e8e8" stroke-dasharray="1 1"/><path d="M0.5 1V12M12.5 1V12" stroke="#e8e8e8"/><path d="M0 11.5H13" stroke="#e8e8e8" stroke-dasharray="1 1"/></svg>
<svg style="left:782px;top:28px;" width="13" height="13" viewBox="0 0 13 13"><rect x="2.5" y="3.5" width="8" height="8" fill="#9a9a9a" stroke="#e8e8e8"/><path d="M0.5 1V12M12.5 1V12M0 1.5H13" stroke="#e8e8e8"/><path d="M6 3V11" stroke="#ddd" stroke-dasharray="1 1"/></svg>
<svg style="left:804px;top:28px;" width="13" height="13" viewBox="0 0 13 13"><rect x="1" y="2" width="11" height="9" fill="#efefef"/><rect x="3" y="6" width="3" height="3" fill="#222"/><rect x="8" y="4" width="2" height="2" fill="#222"/><path d="M0.5 1V12M12.5 1V12" stroke="#e8e8e8"/></svg>
<svg style="left:824px;top:28px;" width="13" height="13" viewBox="0 0 13 13"><rect x="1" y="2" width="11" height="9" fill="#efefef"/><rect x="3" y="6" width="3" height="3" fill="#222"/><rect x="7" y="3.5" width="3" height="2.5" fill="#222"/><path d="M0.5 1V12M12.5 1V12" stroke="#e8e8e8"/></svg>
<svg style="left:844px;top:28px;" width="13" height="13" viewBox="0 0 13 13"><rect x="1.5" y="2.5" width="10" height="8" fill="#333" stroke="#efefef" stroke-width="1.4"/><rect x="4" y="4.5" width="5" height="4" fill="#aaa" stroke="#eee" stroke-width="0.7"/><path d="M0.5 1V12M12.5 1V12" stroke="#e8e8e8"/></svg>
<div style="left:762.5px;top:46px;width:8px;height:9px;background:#565656;border:1px solid #353535;border-radius:1px"></div>
<div class="t" style="left:774px;top:46.8px;font-size:7px;color:#f0f0f0;-webkit-text-stroke:0.2px #f0f0f0">Automatisch einpassen</div>
<svg style="left:866.5px;top:28px;" width="12" height="13" viewBox="0 0 12 13"><path d="M1 0.5V11.5" stroke="#eee" stroke-width="1.2"/><rect x="2.5" y="2.5" width="6" height="3" fill="#888" stroke="#eee"/><rect x="2.5" y="7.5" width="8" height="3" fill="#555" stroke="#eee"/></svg>
<svg style="left:886px;top:28px;" width="12" height="13" viewBox="0 0 12 13"><path d="M5.5 0.5V12" stroke="#eee" stroke-width="1.2"/><rect x="2.5" y="2.5" width="6" height="3" fill="#888" stroke="#eee"/><rect x="1.5" y="7.5" width="8" height="3" fill="#555" stroke="#eee"/></svg>
<svg style="left:906px;top:28px;" width="12" height="13" viewBox="0 0 12 13"><path d="M10.5 0.5V11.5" stroke="#eee" stroke-width="1.2"/><rect x="3.5" y="2.5" width="6" height="3" fill="#888" stroke="#eee"/><rect x="1.5" y="7.5" width="8" height="3" fill="#555" stroke="#eee"/></svg>
<svg style="left:924px;top:28px;" width="16" height="13" viewBox="0 0 16 13"><path d="M1 0.5V12M1 1.5H5M1 5.5H7" stroke="#bbb" stroke-width="1"/><path d="M4.5 3.5H8.5V9.5H4.5" fill="none" stroke="#aaa" stroke-dasharray="1 1"/><polygon points="11.5,8 15.5,8 13.5,10.5" fill="#eee"/></svg>
<svg style="left:949.5px;top:28.5px;" width="12" height="11" viewBox="0 0 12 11"><rect x="2.5" y="2.5" width="6" height="5" fill="#777" stroke="#e8e8e8" stroke-width="1.3"/><path d="M0.5 2.5H2.5M8.5 2.5H10.5M0.5 7.5H2.5M8.5 7.5H10.5M2.5 0.5V2.5M8.5 0.5V2.5M2.5 7.5V9.5M8.5 7.5V9.5" stroke="#e8e8e8" stroke-width="1.2"/><rect x="10.5" y="8.5" width="1.3" height="1.3" fill="#ddd"/></svg>
<svg style="left:867px;top:44.5px;" width="12" height="13" viewBox="0 0 12 13"><path d="M0 1H11" stroke="#eee" stroke-width="1.2"/><rect x="1.5" y="2.5" width="3" height="8" fill="#555" stroke="#eee"/><rect x="6.5" y="2.5" width="3" height="4" fill="#ccc" stroke="#eee"/></svg>
<svg style="left:886px;top:44.5px;" width="12" height="13" viewBox="0 0 12 13"><path d="M0 6H12" stroke="#eee" stroke-width="1.2"/><rect x="2.5" y="1.5" width="3" height="9" fill="#555" stroke="#eee"/><rect x="7.5" y="3.5" width="3" height="5" fill="#ccc" stroke="#eee"/></svg>
<svg style="left:906px;top:44.5px;" width="12" height="13" viewBox="0 0 12 13"><path d="M0 11.5H11" stroke="#eee" stroke-width="1.2"/><rect x="1.5" y="2.5" width="3" height="8" fill="#555" stroke="#eee"/><rect x="6.5" y="6.5" width="3" height="4" fill="#ccc" stroke="#eee"/></svg>
<div style="left:967px;top:29.5px;width:87px;height:10px;background:#a8a8a8;border:1px solid #2e2e2e;border-radius:1px;box-shadow:inset 0 1px 0 rgba(0,0,0,.18)"><div class="t" style="left:1.8px;top:1.15px;font-size:7.5px;color:#141414;-webkit-text-stroke:0.25px #141414;transform:scaleX(0.89);transform-origin:0 0">[Einfacher Grafikrahmen]+</div></div>
<svg style="left:1054.5px;top:29.5px;" width="10" height="10" viewBox="0 0 10 10"><rect x="0.5" y="0.5" width="9" height="9" fill="#5a5a5a" stroke="#2c2c2c"/><polygon points="2.2,3.3 7.8,3.3 5,7.2" fill="#f2f2f2"/></svg>
<svg style="left:1028px;top:47px;" width="9" height="9" viewBox="0 0 9 9"><rect x="0.5" y="0.5" width="5" height="5" rx="1" fill="#eee" stroke="#333" stroke-width="0.6"/><rect x="3" y="3" width="5.5" height="5.5" rx="1" fill="#222" stroke="#ccc" stroke-width="0.8"/></svg>
<svg style="left:1037.5px;top:47.5px;" width="8" height="8" viewBox="0 0 8 8"><path d="M1 3H5A2 2 0 0 1 5 7H2.5" fill="none" stroke="#ddd" stroke-width="1.1"/><path d="M3 1L1 3L3 5" fill="none" stroke="#ddd" stroke-width="1.1"/></svg>
<svg style="left:1049px;top:47.5px;" width="8" height="8" viewBox="0 0 8 8"><rect x="0.5" y="0.5" width="6.5" height="6.5" fill="none" stroke="#e4e4e4" stroke-width="1" stroke-dasharray="2 1"/><rect x="2.5" y="2.5" width="2.5" height="2.5" fill="#ddd"/></svg>
<svg style="left:1057.5px;top:48px;" width="7" height="7" viewBox="0 0 7 7"><path d="M1 6L6 1M2 1.5L5 5" stroke="#ccc" stroke-width="1"/></svg>
<svg style="left:1884px;top:36px;" width="10" height="13" viewBox="0 0 10 13"><path d="M6.5 0.5L1.5 6.5H5L3.5 12.5L8.5 5H5Z" fill="#e4e4e4"/></svg>
<svg style="left:1904px;top:38.5px;" width="13" height="7" viewBox="0 0 13 7"><polygon points="0,0.5 4,0.5 2,2.8" fill="#ddd"/><path d="M5 1H12M5 3.5H12M5 6H12" stroke="#bdbdbd" stroke-width="1.3"/></svg>
<div style="left:0px;top:60.3px;width:41.3px;height:8.5px;background:#2c2c2c"></div>
<svg style="left:3px;top:62px;" width="8" height="6" viewBox="0 0 8 6"><path d="M3.3 0.4L0.5 3L3.3 5.6ZM7 0.4L4.2 3L7 5.6Z" fill="#dcdcdc"/></svg>
<div style="left:44px;top:60.8px;width:253.5px;height:14.2px;background:#434343;border-top:1px solid #535353"></div>
<div style="left:297.5px;top:60.8px;width:1.3px;height:14.2px;background:#232323"></div>
<svg style="left:50px;top:64.7px;" width="7" height="7" viewBox="0 0 7 7"><path d="M1.3 1.3L5.7 5.7M5.7 1.3L1.3 5.7" stroke="#dedede" stroke-width="1"/></svg>
<div class="t" style="left:61.8px;top:65.3px;font-size:8.15px;color:#f0f0f0;font-weight:bold;letter-spacing:-0.05px">*textilspannrahmen_70x100cm_landscape_1s.indd @ 230 %</div>
<div style="left:0px;top:69px;width:42px;height:933px;background:#484848;border-top:1px solid #5c5c5c;border-left:1px solid #3a3a3a"></div>
<div style="left:41px;top:69px;width:1.5px;height:933px;background:#2f2f2f"></div>
<svg style="left:12px;top:72px;" width="18" height="3" viewBox="0 0 18 3"><path d="M0 1.5H18" stroke="#2c2c2c" stroke-width="2" stroke-dasharray="1.5 0.7"/></svg>
<svg style="left:6px;top:81px;" width="12" height="16" viewBox="0 0 12 16"><path d="M2 1.5V13L4.8 10.3L6.8 14.5L8.6 13.6L6.7 9.6H10.3Z" fill="#2e2e2e" stroke="#f2f2f2" stroke-width="1.2" stroke-linejoin="round"/></svg>
<div style="left:21.5px;top:81px;width:17.5px;height:15.7px;background:#2f2f2f;border:1px solid #292929"></div>
<svg style="left:25px;top:81px;" width="12" height="16" viewBox="0 0 12 16"><path d="M2 1.5V13L4.8 10.3L6.8 14.5L8.6 13.6L6.7 9.6H10.3Z" fill="#ececec" stroke="#ececec" stroke-width="0.6" stroke-linejoin="round"/></svg>
<svg style="left:6px;top:99px;" width="13" height="13" viewBox="0 0 13 13"><path d="M1 0.5H6.5L9.5 3.5V11H1Z" fill="#c2c8c5"/><path d="M6.5 0.5V3.5H9.5Z" fill="#8a8a8a"/><path d="M3 1V10.5" stroke="#a4aaa8" stroke-width="1.5"/><path d="M8 6.5V12.5L9.6 11L10.7 13L11.7 12.5L10.7 10.5H12.5Z" fill="#f2f2f2" stroke="#333" stroke-width="0.4"/></svg>
<svg style="left:22.5px;top:99.5px;" width="16" height="12" viewBox="0 0 16 12"><path d="M1 1V11M14.8 1V11" stroke="#e8e8e8" stroke-width="1.1"/><path d="M3.5 6H12.5M5.5 3.8L3.3 6L5.5 8.2M10.5 3.8L12.7 6L10.5 8.2" fill="none" stroke="#e8e8e8" stroke-width="1.2"/></svg>
<svg style="left:5.5px;top:114px;" width="13" height="13" viewBox="0 0 13 13"><path d="M4 1L8 5M8 2V5H5" fill="none" stroke="#eee" stroke-width="1.3"/><path d="M1 6V12.5H12V6" fill="#8c8c8c" stroke="#e4e4e4"/><path d="M1 8.5H12" stroke="#e4e4e4"/><path d="M2.5 10.5H10.5" stroke="#e8e8e8" stroke-width="1.6" stroke-dasharray="1.5 1"/></svg>
<svg style="left:24.5px;top:114px;" width="13" height="13" viewBox="0 0 13 13"><path d="M6 5L10.5 0.8M7.5 0.8H10.5V3.8" fill="none" stroke="#eee" stroke-width="1.3"/><path d="M1 6V12.5H12V6" fill="#8c8c8c" stroke="#e4e4e4"/><path d="M1 8.5H12" stroke="#e4e4e4"/><path d="M2.5 10.5H10.5" stroke="#e8e8e8" stroke-width="1.6" stroke-dasharray="1.5 1"/></svg>
<svg style="left:5px;top:134px;" width="16" height="16" viewBox="0 0 16 16"><text x="1.5" y="12.8" font-family="Liberation Serif, serif" font-size="15.5" font-weight="bold" fill="#ececec">T</text><polygon points="14.5,12 14.5,15 11.5,15" fill="#e0e0e0"/></svg>
<svg style="left:23px;top:134px;" width="16" height="16" viewBox="0 0 16 16"><path d="M2 12.5L12 1.5" stroke="#e8e8e8" stroke-width="1.3"/></svg>
<svg style="left:4.5px;top:150px;" width="17" height="16" viewBox="0 0 17 16"><path d="M1.5 12.5L4 5.5L9 2.5L12.5 6L9.5 11Z" fill="#a0a0a0" stroke="#ececec" stroke-width="1.1" stroke-linejoin="round"/><path d="M1.5 12.5L6.5 7.5" stroke="#333" stroke-width="1"/><path d="M8.5 1.5L13.5 6.5" stroke="#ececec" stroke-width="2"/><polygon points="16,12.5 16,15.5 13,15.5" fill="#e0e0e0"/></svg>
<svg style="left:23.5px;top:150px;" width="17" height="16" viewBox="0 0 17 16"><path d="M1.5 12L2.5 8.5L9 2L12 5L5.5 11.5Z" fill="#8e8e8e" stroke="#e8e8e8" stroke-width="1" stroke-linejoin="round"/><path d="M8.5 1.5L10.5 0.8L13 3.3L12.3 5" fill="#ddd" stroke="#e8e8e8"/><path d="M1.5 12L3.5 11.3L2.3 10Z" fill="#222"/><polygon points="16,12.5 16,15.5 13,15.5" fill="#e0e0e0"/></svg>
<svg style="left:5.5px;top:168px;" width="16" height="14" viewBox="0 0 16 14"><rect x="1" y="1" width="10" height="9" fill="#7e7e7e" stroke="#ececec" stroke-width="1.2"/><path d="M1 1L11 10M11 1L1 10" stroke="#ececec" stroke-width="1"/><polygon points="15,10.5 15,13.5 12,13.5" fill="#e0e0e0"/></svg>
<svg style="left:24px;top:168px;" width="16" height="14" viewBox="0 0 16 14"><rect x="1" y="1" width="10" height="9" fill="#8a8a8a" stroke="#ececec" stroke-width="1.2"/><polygon points="15,10.5 15,13.5 12,13.5" fill="#e0e0e0"/></svg>
<svg style="left:5.5px;top:188px;" width="14" height="13" viewBox="0 0 14 13"><circle cx="10.5" cy="3" r="2" fill="none" stroke="#e8e8e8" stroke-width="1.2"/><circle cx="10.5" cy="10" r="2" fill="none" stroke="#e8e8e8" stroke-width="1.2"/><path d="M9 4L1 9.5M9 9L1 3.5" stroke="#e8e8e8" stroke-width="1.3"/></svg>
<svg style="left:23.5px;top:188px;" width="17" height="14" viewBox="0 0 17 14"><rect x="3.5" y="1.5" width="9" height="8" fill="none" stroke="#dcdcdc" stroke-width="1.3" stroke-dasharray="1.5 1.5"/><path d="M1 1V9L3 7.2L4.4 10L5.6 9.4L4.3 6.8H7Z" fill="#f2f2f2" stroke="#333" stroke-width="0.3"/><polygon points="16.5,10.5 16.5,13.5 13.5,13.5" fill="#e0e0e0"/></svg>
<svg style="left:5px;top:204.5px;" width="14" height="11" viewBox="0 0 14 11"><defs><linearGradient id="g1"><stop offset="0" stop-color="#e8e8e8"/><stop offset="1" stop-color="#3a3a3a"/></linearGradient></defs><rect x="0.7" y="0.7" width="12.6" height="9.6" fill="url(#g1)" stroke="#e4e4e4" stroke-width="1.2"/></svg>
<svg style="left:24px;top:204.5px;" width="14" height="11" viewBox="0 0 14 11"><rect x="0.7" y="0.7" width="12.6" height="9.6" fill="#8c8c8c" stroke="#e4e4e4" stroke-width="1.2"/><path d="M1.5 3.5H12.5" stroke="#222" stroke-width="2.5" stroke-dasharray="1.5 1.2"/><path d="M1.5 7.5H12.5" stroke="#444" stroke-width="2" stroke-dasharray="2 1.5"/></svg>
<svg style="left:6px;top:225.5px;" width="13" height="12" viewBox="0 0 13 12"><path d="M0.7 0.7H11.3V7.5L8 10.8H0.7Z" fill="#8c8c8c" stroke="#e4e4e4" stroke-width="1.2"/><path d="M8 10.8V7.5H11.3" fill="#555" stroke="#e4e4e4" stroke-width="0.8"/><rect x="2.5" y="2.5" width="5" height="4.5" fill="#666"/></svg>
<svg style="left:23.5px;top:224px;" width="17" height="15" viewBox="0 0 17 15"><path d="M2.5 9.5L8 4L10 6L4.5 11.5H2.5Z" fill="#777" stroke="#e4e4e4" stroke-width="1"/><path d="M7.5 2.5L11.5 6.5M9.5 4L12 1.5" stroke="#ececec" stroke-width="2.2" stroke-linecap="round"/><path d="M1 13H11" stroke="#e4e4e4" stroke-width="1.5" stroke-dasharray="2 1"/><polygon points="16.5,11.5 16.5,14.5 13.5,14.5" fill="#e0e0e0"/></svg>
<svg style="left:5px;top:240px;" width="14" height="14" viewBox="0 0 14 14"><path d="M3.5 13L1 8.5C0.5 7.5 1.8 6.8 2.5 7.8L3.5 9V3C3.5 2 5 2 5 3V1.8C5 0.8 6.5 0.8 6.5 1.8V2.3C6.5 1.3 8 1.3 8 2.3V3.3C8 2.5 9.5 2.5 9.5 3.5V9.5C9.5 11 9 12 8.5 13Z" fill="#bdbdbd" stroke="#ececec" stroke-width="0.9"/><path d="M5 3V7M6.5 2.5V7M8 3.5V7" stroke="#666" stroke-width="0.7"/></svg>
<svg style="left:24px;top:240px;" width="15" height="15" viewBox="0 0 15 15"><circle cx="5.5" cy="5.5" r="4" fill="#8a8a8a" stroke="#e4e4e4" stroke-width="1.4"/><path d="M8.5 8.5L13 13" stroke="#e8e8e8" stroke-width="2.4" stroke-linecap="round"/></svg>
<svg style="left:14px;top:272px;" width="22" height="21" viewBox="0 0 22 21"><path d="M0.5 0.8H20.8V20H0.5ZM6 6.5V14H14.4V6.5Z" fill="#fff" fill-rule="evenodd" stroke="#2a2a2a" stroke-width="0.8"/><path d="M1 19.5L20.5 1.2" stroke="#e8201c" stroke-width="1.8"/></svg>
<div style="left:5.5px;top:263px;width:20.8px;height:20.5px;background:#232323;border:1.5px solid #6a6a6a;border-radius:1.5px"></div>
<svg style="left:28px;top:261.5px;" width="9" height="9" viewBox="0 0 9 9"><path d="M2.5 2.2C5.5 2 7 3.5 6.8 6.5" fill="none" stroke="#dcdcdc" stroke-width="1.3"/><polygon points="0.3,2.3 3.3,0.2 3.3,4.4" fill="#dcdcdc"/><polygon points="4.7,5.8 8.9,5.8 6.8,8.8" fill="#dcdcdc"/></svg>
<svg style="left:4px;top:286px;" width="10" height="9" viewBox="0 0 10 9"><rect x="3.5" y="3" width="5.5" height="5.5" fill="#222" stroke="#bbb" stroke-width="0.8"/><circle cx="3.4" cy="3.4" r="2.7" fill="#fff" stroke="#ccc" stroke-width="0.5"/><circle cx="3.4" cy="3.4" r="1.3" fill="#e8365e"/></svg>
<div style="left:7.5px;top:297px;width:10.5px;height:10.5px;background:#2e2e2e;border-radius:1px"></div>
<svg style="left:9px;top:298.5px;" width="8" height="8" viewBox="0 0 8 8"><rect x="0.7" y="0.7" width="6.6" height="6.6" fill="#8a8a8a" stroke="#d8d8d8" stroke-width="1.2"/></svg>
<div class="t" style="left:25.5px;top:298px;font-size:10.5px;color:#8e8e8e;font-family:'Liberation Serif',serif">T</div>
<div style="left:3.3px;top:314.2px;width:11px;height:10.5px;background:#2c2c2c;border-radius:1px"></div>
<div style="left:5px;top:316px;width:7.6px;height:7px;background:#2a2a2a;border:1px solid #5e5e5e"></div>
<svg style="left:16.5px;top:315.5px;" width="7" height="7.5" viewBox="0 0 7 7.5"><defs><linearGradient id="g2"><stop offset="0" stop-color="#fff"/><stop offset="1" stop-color="#333"/></linearGradient></defs><rect x="0" y="0" width="7" height="7.5" fill="url(#g2)"/></svg>
<svg style="left:29px;top:315.5px;" width="7.5" height="7.5" viewBox="0 0 7.5 7.5"><rect x="0" y="0" width="7.5" height="7.5" fill="#fff"/><path d="M0.5 7L7 0.5" stroke="#e8201c" stroke-width="1.6"/></svg>
<div style="left:3px;top:330px;width:17px;height:13.7px;background:#2e2e2e;border:1px solid #282828"></div>
<svg style="left:7.5px;top:332.2px;" width="9" height="9" viewBox="0 0 9 9"><g transform="scale(0.9)"><rect x="0.7" y="0.7" width="8.6" height="8.6" fill="#555" stroke="#e0e0e0" stroke-width="1.2"/><path d="M2 6C3 3.5 4.5 3.5 5 5S7 6.5 8 4" fill="none" stroke="#e8e8e8" stroke-width="1.2"/></g></svg>
<svg style="left:26px;top:332.2px;" width="14" height="13" viewBox="0 0 14 13"><rect x="0.7" y="0.7" width="9.6" height="8.6" fill="#666" stroke="#dcdcdc" stroke-width="1.2"/><path d="M0.7 3H10.3" stroke="#dcdcdc" stroke-width="1"/><polygon points="13,9 13,12 10,12" fill="#e0e0e0"/></svg>
<div style="left:1796px;top:60px;width:124px;height:10px;background:#303030"></div>
<svg style="left:1909px;top:62px;" width="8" height="6" viewBox="0 0 8 6"><path d="M3.3 0.4L0.5 3L3.3 5.6ZM7 0.4L4.2 3L7 5.6Z" fill="#dcdcdc"/></svg>
<div style="left:1796px;top:70px;width:124px;height:932px;background:#484848;border-top:1px solid #585858"></div>
<svg style="left:1849px;top:72px;" width="16" height="3" viewBox="0 0 16 3"><path d="M0 1.5H16" stroke="#2a2a2a" stroke-width="2" stroke-dasharray="1.5 0.7"/></svg>
<svg style="left:1803px;top:80.5px;" width="15" height="14" viewBox="0 0 15 14"><path d="M7.5 1V13" stroke="#e8e8e8" stroke-width="1"/><path d="M1 4L3 2H6.5V11H1Z" fill="#cfcfcf"/><path d="M14 4L12 2H8.5V11H14Z" fill="#cfcfcf"/><path d="M1 4H3V2M14 4H12V2" fill="none" stroke="#777" stroke-width="0.7"/><path d="M2.5 5.5H5M2.5 7.5H5M10 5.5H12.5M10 7.5H12.5" stroke="#8c8c8c" stroke-width="0.8"/></svg>
<div class="t" style="left:1823.3px;top:83.8px;font-size:8.8px;color:#f0f0f0;font-weight:bold;text-shadow:0 1px 0 rgba(0,0,0,.5);transform:scaleX(.925);transform-origin:0 0">Seiten</div>
<svg style="left:1803px;top:101.57px;" width="15" height="14" viewBox="0 0 15 14"><path d="M7.5 1L14 4.5L7.5 8L1 4.5Z" fill="#e8e8e8"/><path d="M1.5 8L7.5 11.2L13.5 8" fill="none" stroke="#e8e8e8" stroke-width="1.7"/></svg>
<div class="t" style="left:1823.3px;top:104.86999999999999px;font-size:8.8px;color:#f0f0f0;font-weight:bold;text-shadow:0 1px 0 rgba(0,0,0,.5);transform:scaleX(.925);transform-origin:0 0">Ebenen</div>
<svg style="left:1803px;top:122.63999999999999px;" width="15" height="14" viewBox="0 0 15 14"><path d="M6 4.5H4A2.5 2.5 0 0 0 4 9.5H6M9 4.5H11A2.5 2.5 0 0 1 11 9.5H9M5 7H10" fill="none" stroke="#e8e8e8" stroke-width="1.5"/></svg>
<div class="t" style="left:1823.3px;top:125.93999999999998px;font-size:8.8px;color:#f0f0f0;font-weight:bold;text-shadow:0 1px 0 rgba(0,0,0,.5);transform:scaleX(.925);transform-origin:0 0">Verknüpfungen</div>
<div style="left:1796px;top:141.5px;width:124px;height:1px;background:#2f2f2f"></div>
<div style="left:1796px;top:142.5px;width:124px;height:1px;background:#515151"></div>
<svg style="left:1849px;top:144.5px;" width="16" height="3" viewBox="0 0 16 3"><path d="M0 1.5H16" stroke="#2a2a2a" stroke-width="2" stroke-dasharray="1.5 0.7"/></svg>
<svg style="left:1803px;top:153px;" width="15" height="14" viewBox="0 0 15 14"><path d="M1 3H14" stroke="#e0e0e0" stroke-width="1"/><path d="M1 7H14" stroke="#e0e0e0" stroke-width="1.6"/><path d="M1 11.5H14" stroke="#e0e0e0" stroke-width="2.4"/></svg>
<div class="t" style="left:1823.3px;top:156.3px;font-size:8.8px;color:#f0f0f0;font-weight:bold;text-shadow:0 1px 0 rgba(0,0,0,.5);transform:scaleX(.925);transform-origin:0 0">Kontur</div>
<svg style="left:1803px;top:174.07px;" width="15" height="14" viewBox="0 0 15 14"><defs><linearGradient id="gv"><stop offset="0" stop-color="#f0f0f0"/><stop offset="1" stop-color="#333"/></linearGradient></defs><rect x="1.5" y="2.5" width="12" height="9" fill="url(#gv)" stroke="#dcdcdc"/></svg>
<div class="t" style="left:1823.3px;top:177.37px;font-size:8.8px;color:#f0f0f0;font-weight:bold;text-shadow:0 1px 0 rgba(0,0,0,.5);transform:scaleX(.925);transform-origin:0 0">Verlauf</div>
<div style="left:1796px;top:193px;width:124px;height:1px;background:#2f2f2f"></div>
<div style="left:1796px;top:194px;width:124px;height:1px;background:#515151"></div>
<svg style="left:1849px;top:196px;" width="16" height="3" viewBox="0 0 16 3"><path d="M0 1.5H16" stroke="#2a2a2a" stroke-width="2" stroke-dasharray="1.5 0.7"/></svg>
<svg style="left:1803px;top:204.5px;" width="15" height="14" viewBox="0 0 15 14"><text x="1" y="11.5" font-family="Liberation Serif, serif" font-style="italic" font-size="13" fill="#e8e8e8">fx</text></svg>
<div class="t" style="left:1823.3px;top:207.8px;font-size:8.8px;color:#f0f0f0;font-weight:bold;text-shadow:0 1px 0 rgba(0,0,0,.5);transform:scaleX(.925);transform-origin:0 0">Effekte</div>
<div style="left:1796px;top:224px;width:124px;height:1px;background:#2f2f2f"></div>
<div style="left:1796px;top:225px;width:124px;height:1px;background:#515151"></div>
<svg style="left:1849px;top:227px;" width="16" height="3" viewBox="0 0 16 3"><path d="M0 1.5H16" stroke="#2a2a2a" stroke-width="2" stroke-dasharray="1.5 0.7"/></svg>
<svg style="left:1803px;top:235.5px;" width="15" height="14" viewBox="0 0 15 14"><rect x="0.5" y="7.5" width="5" height="4.5" fill="#555" stroke="#ddd"/><rect x="3" y="9.5" width="4.5" height="4" fill="#555" stroke="#ddd"/><text x="6.5" y="9" font-family="Liberation Sans, sans-serif" font-size="10.5" fill="#e8e8e8">A</text></svg>
<div class="t" style="left:1823.3px;top:238.8px;font-size:8.8px;color:#f0f0f0;font-weight:bold;text-shadow:0 1px 0 rgba(0,0,0,.5);transform:scaleX(.925);transform-origin:0 0">Zeichenformate</div>
<svg style="left:1803px;top:256.57px;" width="15" height="14" viewBox="0 0 15 14"><rect x="0.5" y="7.5" width="5" height="4.5" fill="#555" stroke="#ddd"/><rect x="3" y="9.5" width="4.5" height="4" fill="#555" stroke="#ddd"/><path d="M11 2V11M13 2V11M13.5 2H10A2.3 2.3 0 0 0 10 6.5H11" fill="#e0e0e0" stroke="#e0e0e0" stroke-width="0.9"/></svg>
<div class="t" style="left:1823.3px;top:259.87px;font-size:8.8px;color:#f0f0f0;font-weight:bold;text-shadow:0 1px 0 rgba(0,0,0,.5);transform:scaleX(.925);transform-origin:0 0">Absatzformate</div>
<svg style="left:1803px;top:277.64px;" width="15" height="14" viewBox="0 0 15 14"><rect x="5" y="1.5" width="9" height="8.5" fill="#8a8a8a" stroke="#ddd" stroke-dasharray="1.5 1"/><rect x="0.5" y="7.5" width="5" height="4.5" fill="#555" stroke="#ddd"/><rect x="3" y="9.5" width="4.5" height="4" fill="#555" stroke="#ddd"/></svg>
<div class="t" style="left:1823.3px;top:280.94px;font-size:8.8px;color:#f0f0f0;font-weight:bold;text-shadow:0 1px 0 rgba(0,0,0,.5);transform:scaleX(.925);transform-origin:0 0">Objektformate</div>
<div style="left:1796px;top:297px;width:124px;height:1px;background:#2f2f2f"></div>
<div style="left:1796px;top:298px;width:124px;height:1px;background:#515151"></div>
<svg style="left:1849px;top:300px;" width="16" height="3" viewBox="0 0 16 3"><path d="M0 1.5H16" stroke="#2a2a2a" stroke-width="2" stroke-dasharray="1.5 0.7"/></svg>
<svg style="left:1803px;top:308.5px;" width="15" height="14" viewBox="0 0 15 14"><rect x="1.5" y="1.5" width="12" height="11" fill="#6a6a6a" stroke="#e0e0e0"/><rect x="2" y="2" width="11" height="2.5" fill="#e0e0e0"/><path d="M5.5 4V12.5M1.5 7.5H13.5M1.5 10H13.5" stroke="#e0e0e0" stroke-width="0.9"/></svg>
<div class="t" style="left:1823.3px;top:311.8px;font-size:8.8px;color:#f0f0f0;font-weight:bold;text-shadow:0 1px 0 rgba(0,0,0,.5);transform:scaleX(.925);transform-origin:0 0">Tabelle</div>
<svg style="left:1803px;top:329.57px;" width="15" height="14" viewBox="0 0 15 14"><rect x="4.5" y="1.5" width="9.5" height="8.5" fill="#6a6a6a" stroke="#e0e0e0"/><rect x="5" y="2" width="8.5" height="2" fill="#e0e0e0"/><path d="M4.5 6H14M4.5 8H14" stroke="#e0e0e0" stroke-width="0.8"/><rect x="0.5" y="7.5" width="5" height="4.5" fill="#555" stroke="#ddd"/><rect x="3" y="9.5" width="4.5" height="4" fill="#555" stroke="#ddd"/></svg>
<div class="t" style="left:1823.3px;top:332.87px;font-size:8.8px;color:#f0f0f0;font-weight:bold;text-shadow:0 1px 0 rgba(0,0,0,.5);transform:scaleX(.925);transform-origin:0 0">Tabellenformate</div>
<svg style="left:1803px;top:350.64px;" width="15" height="14" viewBox="0 0 15 14"><rect x="4.5" y="1.5" width="9.5" height="8.5" fill="#5a5a5a" stroke="#e0e0e0"/><rect x="8" y="4" width="5.5" height="3.5" fill="#e0e0e0"/><rect x="0.5" y="7.5" width="5" height="4.5" fill="#555" stroke="#ddd"/><rect x="3" y="9.5" width="4.5" height="4" fill="#555" stroke="#ddd"/></svg>
<div class="t" style="left:1823.3px;top:353.94px;font-size:8.8px;color:#f0f0f0;font-weight:bold;text-shadow:0 1px 0 rgba(0,0,0,.5);transform:scaleX(.925);transform-origin:0 0">Zellenformate</div>
<div style="left:1796px;top:369.5px;width:124px;height:1px;background:#2f2f2f"></div>
<div style="left:1796px;top:370.5px;width:124px;height:1px;background:#515151"></div>
<svg style="left:1849px;top:372.5px;" width="16" height="3" viewBox="0 0 16 3"><path d="M0 1.5H16" stroke="#2a2a2a" stroke-width="2" stroke-dasharray="1.5 0.7"/></svg>
<svg style="left:1803px;top:381px;" width="15" height="14" viewBox="0 0 15 14"><path d="M5 1.5H11L13.5 4V9" fill="none" stroke="#e0e0e0" stroke-dasharray="1.3 1"/><path d="M0 5H5M3 3L5.2 5L3 7" fill="none" stroke="#eee" stroke-width="1.3"/><circle cx="10.5" cy="10.5" r="2.6" fill="none" stroke="#e8e8e8" stroke-width="1.8"/><path d="M10.5 6.8V14.2M6.8 10.5H14.2M8 8L13 13M13 8L8 13" stroke="#e8e8e8" stroke-width="1"/><circle cx="10.5" cy="10.5" r="1" fill="#484848"/></svg>
<div class="t" style="left:1823.3px;top:384.3px;font-size:8.8px;color:#f0f0f0;font-weight:bold;text-shadow:0 1px 0 rgba(0,0,0,.5);transform:scaleX(.925);transform-origin:0 0">Datenzusammenführ…</div>
<svg style="left:1803px;top:402.07px;" width="15" height="14" viewBox="0 0 15 14"><path d="M5 2.5H12.5C11 2.5 10.5 4.5 11.5 5.5L4 8C5.5 9 5 11.5 3 11.5H10.5C12.5 11.5 13 9 11.5 8L4 5.5C2.5 4.5 3 2.5 5 2.5Z" fill="#e0e0e0" stroke="#e8e8e8" stroke-width="0.8"/></svg>
<div class="t" style="left:1823.3px;top:405.37px;font-size:8.8px;color:#f0f0f0;font-weight:bold;text-shadow:0 1px 0 rgba(0,0,0,.5);transform:scaleX(.925);transform-origin:0 0">Skripte</div>
<div style="left:1796px;top:421px;width:124px;height:1px;background:#2f2f2f"></div>
<div style="left:1796px;top:422px;width:124px;height:1px;background:#515151"></div>
<svg style="left:1849px;top:424px;" width="16" height="3" viewBox="0 0 16 3"><path d="M0 1.5H16" stroke="#2a2a2a" stroke-width="2" stroke-dasharray="1.5 0.7"/></svg>
<svg style="left:1803px;top:432.5px;" width="15" height="14" viewBox="0 0 15 14"><text x="2" y="12" font-family="Liberation Serif, serif" font-style="italic" font-size="14" fill="#e8e8e8">A</text></svg>
<div class="t" style="left:1823.3px;top:435.8px;font-size:8.8px;color:#f0f0f0;font-weight:bold;text-shadow:0 1px 0 rgba(0,0,0,.5);transform:scaleX(.925);transform-origin:0 0">Glyphen</div>
<svg style="left:1803px;top:453.57px;" width="15" height="14" viewBox="0 0 15 14"><text x="0.5" y="12" font-family="Liberation Sans, sans-serif" font-size="13" fill="#e8e8e8">A</text><path d="M11.5 1V13" stroke="#e8e8e8" stroke-width="1.1"/></svg>
<div class="t" style="left:1823.3px;top:456.87px;font-size:8.8px;color:#f0f0f0;font-weight:bold;text-shadow:0 1px 0 rgba(0,0,0,.5);transform:scaleX(.925);transform-origin:0 0">Zeichen</div>
<svg style="left:1803px;top:474.64px;" width="15" height="14" viewBox="0 0 15 14"><path d="M8.5 2V13M11 2V13M12 2H7A3 3 0 0 0 7 8H8.5" fill="#e0e0e0" stroke="#e0e0e0" stroke-width="1"/></svg>
<div class="t" style="left:1823.3px;top:477.94px;font-size:8.8px;color:#f0f0f0;font-weight:bold;text-shadow:0 1px 0 rgba(0,0,0,.5);transform:scaleX(.925);transform-origin:0 0">Absatz</div>
<div style="left:1796px;top:494px;width:124px;height:1px;background:#2f2f2f"></div>
<div style="left:1796px;top:495px;width:124px;height:1px;background:#515151"></div>
<svg style="left:1849px;top:497px;" width="16" height="3" viewBox="0 0 16 3"><path d="M0 1.5H16" stroke="#2a2a2a" stroke-width="2" stroke-dasharray="1.5 0.7"/></svg>
<svg style="left:1803px;top:505.5px;" width="15" height="14" viewBox="0 0 15 14"><path d="M1 2H14M1 4.5H14M1 7H3M12 7H14M1 9.5H14M1 12H14" stroke="#9e9e9e" stroke-width="1"/><rect x="3.5" y="3.5" width="8" height="7" fill="#cfcfcf"/><circle cx="7.5" cy="7" r="2.2" fill="#484848"/><circle cx="7.5" cy="7" r="1" fill="#ddd"/></svg>
<div class="t" style="left:1823.3px;top:508.8px;font-size:8.8px;color:#f0f0f0;font-weight:bold;text-shadow:0 1px 0 rgba(0,0,0,.5);transform:scaleX(.925);transform-origin:0 0">Textumfluss</div>
<div style="left:1796px;top:525px;width:124px;height:1px;background:#2f2f2f"></div>
<div style="left:1796px;top:526px;width:124px;height:1px;background:#505050"></div>
<div style="left:124px;top:587px;width:157px;height:271px;background:#484848;border:1px solid #2a2a2a;border-radius:3px 3px 0 0;box-shadow:0 1px 5px rgba(0,0,0,.22)"></div>
<div style="left:125px;top:588px;width:155px;height:9px;background:#333;border-radius:2px 2px 0 0"></div>
<svg style="left:128.5px;top:591px;" width="5" height="5" viewBox="0 0 5 5"><path d="M0.5 0.5L4.5 4.5M4.5 0.5L0.5 4.5" stroke="#ddd" stroke-width="0.9"/></svg>
<svg style="left:270.5px;top:591px;" width="7" height="5" viewBox="0 0 7 5"><path d="M2.8 0.3L0.4 2.5L2.8 4.7ZM6.2 0.3L3.8 2.5L6.2 4.7Z" fill="#d8d8d8"/></svg>
<div style="left:125px;top:597px;width:155px;height:13px;background:#353535;border-bottom:1px solid #2c2c2c"></div>
<div style="left:177px;top:597.5px;width:50.5px;height:13px;background:#484848;border-left:1px solid #2a2a2a;border-right:1px solid #2a2a2a;border-top:1px solid #5c5c5c"></div>
<div class="t" style="left:130px;top:599.5px;font-size:8.6px;color:#b4b4b4;font-weight:bold;transform:scaleX(.9);transform-origin:0 0">Ausrichten</div>
<div class="t" style="left:182px;top:599.5px;font-size:8.6px;color:#f4f4f4;font-weight:bold;transform:scaleX(.925);transform-origin:0 0">Pathfinder</div>
<div class="t" style="left:127.8px;top:615.9px;font-size:6.85px;color:#f0f0f0;-webkit-text-stroke:0.2px #f0f0f0">Pfade:</div>
<div class="t" style="left:127.8px;top:646.4px;font-size:6.85px;color:#f0f0f0;-webkit-text-stroke:0.2px #f0f0f0">Pathfinder:</div>
<div class="t" style="left:127.8px;top:676.5px;font-size:6.85px;color:#f0f0f0;-webkit-text-stroke:0.2px #f0f0f0">Form konvertieren:</div>
<div class="t" style="left:127.8px;top:724.3px;font-size:6.85px;color:#f0f0f0;-webkit-text-stroke:0.2px #f0f0f0">Punkt konvertieren:</div>
<svg style="left:130.3px;top:626px;" width="14" height="12" viewBox="0 0 14 12"><path d="M2 10.5C3 5 6 2 11.5 1.5" stroke="#e4e4e4" fill="none" stroke-width="1"/><rect x="0.8" y="9.3" width="2.4" height="2.4" fill="#eee"/><rect x="10.3" y="0.3" width="2.4" height="2.4" fill="#eee"/></svg>
<svg style="left:162px;top:626px;" width="14" height="12" viewBox="0 0 14 12"><ellipse cx="6.5" cy="6.5" rx="5.5" ry="4" stroke="#e4e4e4" fill="none" stroke-width="1" stroke-width="1.2"/><path d="M6.5 6.5L11.5 1.5" stroke="#e4e4e4" fill="none" stroke-width="1" stroke-width="1.2"/></svg>
<svg style="left:193.5px;top:626px;" width="14" height="12" viewBox="0 0 14 12"><ellipse cx="6.5" cy="6.5" rx="5.5" ry="4" stroke="#e4e4e4" fill="none" stroke-width="1" stroke-width="1.2"/><circle cx="7.5" cy="2.6" r="1.2" fill="#eee"/><circle cx="12" cy="6.5" r="1.4" fill="#eee"/></svg>
<svg style="left:224.8px;top:626px;" width="14" height="12" viewBox="0 0 14 12"><path d="M5 2.5H1.5V10.5H5M9 2.5H12.5V10.5H9" stroke="#e4e4e4" fill="none" stroke-width="1" stroke-width="1.2"/><path d="M7 1V12" stroke="#ddd" stroke-width="1.2"/><path d="M5 0.5L7 2.5L5 4.5M9 8.5L7 10.5L9 12.5" stroke="#e4e4e4" fill="none" stroke-width="1" stroke-width="0.9"/></svg>
<svg style="left:130.8px;top:655.2px;" width="13" height="13" viewBox="0 0 13 13"><g transform="translate(1.3,1.3) scale(0.8)"><rect x="1" y="1" width="7.5" height="7.5" fill="#bdbdbd" stroke="#eee"/><rect x="4.5" y="4.5" width="7.5" height="7.5" fill="#bdbdbd" stroke="#eee"/></g></svg>
<svg style="left:162.5px;top:655.2px;" width="13" height="13" viewBox="0 0 13 13"><g transform="translate(1.3,1.3) scale(0.8)"><rect x="1" y="1" width="7.5" height="7.5" fill="#bdbdbd" stroke="#eee"/><rect x="4.5" y="4.5" width="7.5" height="7.5" fill="#484848" stroke="#aaa"/></g></svg>
<svg style="left:194px;top:655.2px;" width="13" height="13" viewBox="0 0 13 13"><g transform="translate(1.3,1.3) scale(0.8)"><rect x="1" y="1" width="7.5" height="7.5" fill="none" stroke="#aaa"/><rect x="4.5" y="4.5" width="7.5" height="7.5" fill="none" stroke="#aaa"/><rect x="4.5" y="4.5" width="4" height="4" fill="#d8d8d8" stroke="#eee"/></g></svg>
<svg style="left:225.3px;top:655.2px;" width="13" height="13" viewBox="0 0 13 13"><g transform="translate(1.3,1.3) scale(0.8)"><rect x="1" y="1" width="7.5" height="7.5" fill="#bdbdbd" stroke="#eee"/><rect x="4.5" y="4.5" width="7.5" height="7.5" fill="#bdbdbd" stroke="#eee"/><rect x="4.5" y="4.5" width="4" height="4" fill="#484848" stroke="#eee"/></g></svg>
<svg style="left:256.7px;top:655.2px;" width="13" height="13" viewBox="0 0 13 13"><g transform="translate(1.3,1.3) scale(0.8)"><rect x="1" y="1" width="7.5" height="7.5" fill="none" stroke="#aaa"/><path d="M8.5 4.5H12V12H4.5V8.5H8.5Z" fill="#bdbdbd" stroke="#eee"/></g></svg>
<svg style="left:130.8px;top:686.7px;" width="13" height="11" viewBox="0 0 13 11"><rect x="1.5" y="1.5" width="10" height="8" stroke="#e4e4e4" fill="none" stroke-width="1"/></svg>
<svg style="left:162.5px;top:686.7px;" width="13" height="11" viewBox="0 0 13 11"><rect x="1.5" y="1.5" width="10" height="8" rx="2.2" stroke="#e4e4e4" fill="none" stroke-width="1"/></svg>
<svg style="left:194px;top:686.7px;" width="13" height="11" viewBox="0 0 13 11"><path d="M4 1.5H9Q11.5 1.5 11.5 4V7Q11.5 9.5 9 9.5H4Q1.5 9.5 1.5 7V4Q1.5 1.5 4 1.5Z" stroke="#e4e4e4" fill="none" stroke-width="1"/><ellipse cx="6.5" cy="5.5" rx="5" ry="4" stroke="#e4e4e4" fill="none" stroke-width="1"/></svg>
<svg style="left:225.3px;top:686.7px;" width="13" height="11" viewBox="0 0 13 11"><path d="M3.5 1.5H9.5Q9.5 3.5 11.5 3.5V7.5Q9.5 7.5 9.5 9.5H3.5Q3.5 7.5 1.5 7.5V3.5Q3.5 3.5 3.5 1.5Z" stroke="#e4e4e4" fill="none" stroke-width="1"/></svg>
<svg style="left:256.2px;top:686.7px;" width="14" height="11" viewBox="0 0 14 11"><ellipse cx="7" cy="5.5" rx="6" ry="4" stroke="#e4e4e4" fill="none" stroke-width="1"/></svg>
<svg style="left:130.8px;top:704.7px;" width="13" height="11" viewBox="0 0 13 11"><path d="M6.5 1.5L11.5 9.5H1.5Z" stroke="#e4e4e4" fill="none" stroke-width="1"/></svg>
<svg style="left:162.5px;top:704.7px;" width="13" height="11" viewBox="0 0 13 11"><path d="M4 1.5H9L11.5 5.5L9 9.5H4L1.5 5.5Z" stroke="#e4e4e4" fill="none" stroke-width="1"/></svg>
<svg style="left:194px;top:704.7px;" width="13" height="11" viewBox="0 0 13 11"><path d="M2 9.5L11 1.5" stroke="#e4e4e4" fill="none" stroke-width="1" stroke-width="1.1"/></svg>
<svg style="left:225.3px;top:704.7px;" width="13" height="11" viewBox="0 0 13 11"><path d="M6.5 1V10M2 5.5H11" stroke="#e4e4e4" fill="none" stroke-width="1" stroke-width="1.1"/></svg>
<svg style="left:130.3px;top:733px;" width="14" height="13" viewBox="0 0 14 13"><path d="M5 3.5V11.5M5 3.5H11" stroke="#e4e4e4" fill="none" stroke-width="1"/><rect x="3.5" y="2" width="3" height="3" fill="#888" stroke="#eee" stroke-width="0.8"/></svg>
<svg style="left:162px;top:733px;" width="14" height="13" viewBox="0 0 14 13"><path d="M5 3.5V11.5M5 3.5H11" stroke="#e4e4e4" fill="none" stroke-width="1"/><rect x="3.5" y="2" width="3" height="3" fill="#888" stroke="#eee" stroke-width="0.8"/><circle cx="11" cy="3.5" r="1.2" fill="#eee"/><circle cx="5" cy="11" r="1.2" fill="#eee"/></svg>
<svg style="left:193.5px;top:733px;" width="14" height="13" viewBox="0 0 14 13"><path d="M2 1.5L12 11.5" stroke="#e4e4e4" fill="none" stroke-width="1"/><rect x="5.5" y="5" width="3" height="3" fill="#888" stroke="#eee" stroke-width="0.8" transform="rotate(45 7 6.5)"/><circle cx="2.5" cy="2" r="1.3" fill="#eee"/><circle cx="11.5" cy="11" r="1.3" fill="#eee"/></svg>
<svg style="left:224.8px;top:733px;" width="14" height="13" viewBox="0 0 14 13"><path d="M2 11.5L7 6.5M7 6.5L11 2.5" stroke="#e4e4e4" fill="none" stroke-width="1" stroke-dasharray="2 1"/><rect x="5.5" y="5" width="3" height="3" fill="#888" stroke="#eee" stroke-width="0.8"/><circle cx="2.5" cy="11" r="1.3" fill="#eee"/><circle cx="11" cy="2.5" r="1.3" fill="#eee"/></svg>
<div style="left:128px;top:641.5px;width:148px;height:1px;background:#525252"></div>
<div style="left:125px;top:749.5px;width:155px;height:2.5px;background:#2b2b2b"></div>
<div style="left:125px;top:752px;width:155px;height:13px;background:#353535;border-bottom:1px solid #2c2c2c"></div>
<div style="left:125px;top:752px;width:68px;height:13.5px;background:#484848;border-right:1px solid #2a2a2a;border-top:1px solid #5a5a5a"></div>
<svg style="left:128px;top:755.5px;" width="5" height="7" viewBox="0 0 5 7"><path d="M0.7 2.8L2.5 0.8L4.3 2.8M0.7 4.2L2.5 6.2L4.3 4.2" fill="none" stroke="#ddd" stroke-width="0.9"/></svg>
<div class="t" style="left:134.5px;top:754.6px;font-size:8.6px;color:#f4f4f4;font-weight:bold;transform:scaleX(.95);transform-origin:0 0">Informationen</div>
<svg style="left:266.5px;top:756.5px;" width="11" height="6" viewBox="0 0 11 6"><polygon points="0,0.3 3.6,0.3 1.8,2.3" fill="#ddd"/><path d="M4.5 0.7H11M4.5 2.9H11M4.5 5.1H11" stroke="#a0a0a0" stroke-width="1"/></svg>
<div class="t" style="left:142px;top:769.3px;font-size:7px;color:#f0f0f0;-webkit-text-stroke:0.2px #f0f0f0">X:&#8202;460 mm</div>
<div class="t" style="left:142px;top:778.4px;font-size:7px;color:#f0f0f0;-webkit-text-stroke:0.2px #f0f0f0">Y:&#8202;938 mm</div>
<div class="t" style="left:142px;top:787.5px;font-size:7px;color:#f0f0f0;-webkit-text-stroke:0.2px #f0f0f0">D:</div>
<div class="t" style="left:219px;top:769.3px;font-size:7px;color:#f0f0f0;-webkit-text-stroke:0.2px #f0f0f0">B:&#8202;17,7 mm</div>
<div class="t" style="left:219px;top:778.4px;font-size:7px;color:#f0f0f0;-webkit-text-stroke:0.2px #f0f0f0">H:&#8202;18,5 mm</div>
<svg style="left:128.5px;top:776.5px;" width="9" height="8" viewBox="0 0 9 8"><path d="M3.5 0.5V6.5M0.5 3.5H6.5" stroke="#e0e0e0" stroke-width="1"/><rect x="6.5" y="5.5" width="1.3" height="1.3" fill="#ddd"/></svg>
<svg style="left:205.5px;top:776.5px;" width="9" height="8" viewBox="0 0 9 8"><rect x="1" y="1" width="5.5" height="5.5" fill="none" stroke="#e0e0e0" stroke-width="1" stroke-dasharray="3 1.5"/></svg>
<svg style="left:217px;top:786.5px;" width="8" height="6" viewBox="0 0 8 6"><path d="M0.5 5.5H7.5L0.5 5.5L5 0.5" fill="none" stroke="#e0e0e0" stroke-width="0.9"/><path d="M3.5 5.5A3 3 0 0 0 2.8 3.2" fill="none" stroke="#e0e0e0" stroke-width="0.8"/></svg>
<div style="left:201.5px;top:768px;width:1px;height:78px;background:#404040"></div>
<div style="left:129px;top:817.5px;width:148px;height:1px;background:#404040"></div>
<svg style="left:141px;top:821px;" width="9" height="9" viewBox="0 0 9 9"><rect x="0.5" y="0.5" width="8" height="8" fill="#8a8a8a" stroke="#d8d8d8"/><path d="M1 3.5H8M1 6H8" stroke="#777" stroke-width="0.6"/></svg>
<div class="t" style="left:152px;top:822px;font-size:7px;color:#f0f0f0;-webkit-text-stroke:0.2px #f0f0f0">C=75 M=65</div>
<div class="t" style="left:152.3px;top:832.2px;font-size:7px;color:#f0f0f0;-webkit-text-stroke:0.2px #f0f0f0">Y=58 K=74</div>
<svg style="left:129px;top:832.5px;" width="12" height="11" viewBox="0 0 12 11"><rect x="0.5" y="0.5" width="8" height="8.5" fill="none" stroke="#ccc" stroke-width="0.8"/><rect x="2" y="2" width="5" height="5.5" fill="#e4e4e4"/><rect x="9.5" y="8.5" width="1.3" height="1.3" fill="#ddd"/></svg>
<svg style="left:204px;top:832.5px;" width="12" height="11" viewBox="0 0 12 11"><rect x="1" y="1" width="7" height="7.5" fill="none" stroke="#f0f0f0" stroke-width="1.6"/><rect x="9.8" y="8.5" width="1.3" height="1.3" fill="#ddd"/></svg>
<div style="left:1341px;top:360px;width:198px;height:378.5px;background:#484848;border:1px solid #2a2a2a;border-radius:3px 3px 0 0;box-shadow:0 1px 5px rgba(0,0,0,.22)"></div>
<div style="left:1342px;top:361px;width:196px;height:9px;background:#333;border-radius:2px 2px 0 0"></div>
<svg style="left:1345.5px;top:363.5px;" width="5" height="5" viewBox="0 0 5 5"><path d="M0.5 0.5L4.5 4.5M4.5 0.5L0.5 4.5" stroke="#ddd" stroke-width="0.9"/></svg>
<svg style="left:1529px;top:363.5px;" width="7" height="5" viewBox="0 0 7 5"><path d="M2.8 0.3L0.4 2.5L2.8 4.7ZM6.2 0.3L3.8 2.5L6.2 4.7Z" fill="#d8d8d8"/></svg>
<div style="left:1342px;top:370px;width:196px;height:13px;background:#353535;border-bottom:1px solid #2c2c2c"></div>
<div style="left:1342px;top:370px;width:55px;height:13.5px;background:#484848;border-right:1px solid #2a2a2a;border-top:1px solid #5a5a5a"></div>
<svg style="left:1345px;top:373.5px;" width="5" height="7" viewBox="0 0 5 7"><path d="M0.7 2.8L2.5 0.8L4.3 2.8M0.7 4.2L2.5 6.2L4.3 4.2" fill="none" stroke="#ddd" stroke-width="0.9"/></svg>
<div class="t" style="left:1351.7px;top:372.5px;font-size:8.8px;color:#f6f6f6;font-weight:bold;transform:scaleX(.9);transform-origin:0 0">Farbfelder</div>
<svg style="left:1525.5px;top:374.5px;" width="11" height="6" viewBox="0 0 11 6"><polygon points="0,0.3 3.6,0.3 1.8,2.3" fill="#ddd"/><path d="M4.5 0.7H11M4.5 2.9H11M4.5 5.1H11" stroke="#a0a0a0" stroke-width="1"/></svg>
<svg style="left:1346px;top:385.5px;" width="15" height="14" viewBox="0 0 15 14"><rect x="5.5" y="5.5" width="7.5" height="7.5" fill="#fff" stroke="#222" stroke-width="0.7"/><path d="M6 12.5L12.5 6" stroke="#e02020" stroke-width="1.4"/><rect x="7.7" y="7.7" width="3" height="3" fill="#d23"/><rect x="0.7" y="0.7" width="7.6" height="7.6" fill="#262626" stroke="#5e5e5e" stroke-width="1"/><path d="M10 1.5A2.5 2.5 0 0 1 12.5 4" fill="none" stroke="#ccc" stroke-width="0.9"/></svg>
<div style="left:1368.5px;top:387px;width:11px;height:11px;background:#2e2e2e;border-radius:1px"></div>
<svg style="left:1370px;top:388.5px;" width="8" height="8" viewBox="0 0 8 8"><rect x="0.7" y="0.7" width="6.6" height="6.6" fill="#8a8a8a" stroke="#d8d8d8" stroke-width="1.1"/></svg>
<div class="t" style="left:1381.5px;top:387.5px;font-size:11.5px;color:#a8a8a8;font-family:'Liberation Serif',serif">T</div>
<div class="t" style="left:1412px;top:389.8px;font-size:7.2px;color:#f2f2f2;-webkit-text-stroke:0.25px #f2f2f2">Farbton:</div>
<div style="left:1441px;top:388px;width:23px;height:9px;background:#a6a6a6;border:1px solid #2e2e2e"><div class="t" style="left:1.5px;top:0.2px;font-size:7.2px;color:#111">100</div></div>
<svg style="left:1465.5px;top:388px;" width="8" height="9" viewBox="0 0 8 9"><rect x="0.5" y="0.5" width="7" height="8" fill="#5a5a5a" stroke="#2c2c2c"/><polygon points="2.5,2 2.5,7 6,4.5" fill="#f2f2f2"/></svg>
<div class="t" style="left:1475.3px;top:389.8px;font-size:7.2px;color:#f2f2f2;-webkit-text-stroke:0.25px #f2f2f2">%</div>
<div style="left:1342px;top:402px;width:187px;height:316px;background:#484848;border-top:1px solid #2f2f2f"></div>
<div style="left:1342px;top:416.5px;width:187px;height:1px;background:#383838"></div>
<div style="left:1342px;top:417.5px;width:187px;height:0.5px;background:#505050"></div>
<svg style="left:1353px;top:405.2px;" width="9.5" height="9.5" viewBox="0 0 9.5 9.5"><rect x="0.5" y="0.5" width="8.5" height="8.5" rx="1.2" fill="#fff" stroke="#0e0e0e" stroke-width="1.1"/><path d="M1.3 8.2L8.2 1.3" stroke="#e02020" stroke-width="1.5"/></svg>
<div class="t" style="left:1364.3px;top:407.4px;font-size:6.85px;color:#f0f0f0;-webkit-text-stroke:0.2px #f0f0f0">[Ohne]</div>
<svg style="left:1493px;top:405px;" width="10" height="10" viewBox="0 0 10 10"><path d="M0.8 0.8L8.8 8.8M8.8 0.8L0.8 8.8" stroke="#eee" stroke-width="1.1"/><path d="M6.5 1L8.7 0.5" stroke="#fff" stroke-width="1.8"/></svg>
<svg style="left:1516.5px;top:405.5px;" width="9" height="9" viewBox="0 0 9 9"><rect x="0.3" y="0.3" width="8.4" height="8.4" fill="#ece8dc" stroke="#999" stroke-width="0.6"/><path d="M1 8L8 1" stroke="#e03030" stroke-width="1"/></svg>
<div style="left:1342px;top:431.52px;width:187px;height:1px;background:#383838"></div>
<div style="left:1342px;top:432.52px;width:187px;height:0.5px;background:#505050"></div>
<div style="left:1353px;top:420.21999999999997px;width:9.5px;height:9.5px;background:#000;border:1px solid #101010;border-radius:1.5px"></div>
<div class="t" style="left:1364.3px;top:422.41999999999996px;font-size:6.85px;color:#f0f0f0;-webkit-text-stroke:0.2px #f0f0f0">[Passermarken]</div>
<svg style="left:1493px;top:420.02px;" width="10" height="10" viewBox="0 0 10 10"><path d="M0.8 0.8L8.8 8.8M8.8 0.8L0.8 8.8" stroke="#eee" stroke-width="1.1"/><path d="M6.5 1L8.7 0.5" stroke="#fff" stroke-width="1.8"/></svg>
<svg style="left:1516.5px;top:420.52px;" width="9" height="9" viewBox="0 0 9 9"><rect x="0.3" y="0.3" width="8.4" height="8.4" fill="#666" stroke="#ddd" stroke-width="0.7"/><circle cx="4.5" cy="4.5" r="2.2" fill="none" stroke="#eee" stroke-width="0.9"/><path d="M4.5 1V8M1 4.5H8" stroke="#eee" stroke-width="0.7"/></svg>
<div style="left:1342px;top:446.54px;width:187px;height:1px;background:#383838"></div>
<div style="left:1342px;top:447.54px;width:187px;height:0.5px;background:#505050"></div>
<div style="left:1353px;top:435.24px;width:9.5px;height:9.5px;background:#fff;border:1px solid #101010;border-radius:1.5px"></div>
<div class="t" style="left:1364.3px;top:437.44px;font-size:6.85px;color:#f0f0f0;-webkit-text-stroke:0.2px #f0f0f0">[Papier]</div>
<div style="left:1342px;top:461.56px;width:187px;height:1px;background:#383838"></div>
<div style="left:1342px;top:462.56px;width:187px;height:0.5px;background:#505050"></div>
<div style="left:1353px;top:450.26px;width:9.5px;height:9.5px;background:#000;border:1px solid #101010;border-radius:1.5px"></div>
<div class="t" style="left:1364.3px;top:452.46px;font-size:6.85px;color:#f0f0f0;-webkit-text-stroke:0.2px #f0f0f0">[Schwarz]</div>
<svg style="left:1493px;top:450.06px;" width="10" height="10" viewBox="0 0 10 10"><path d="M0.8 0.8L8.8 8.8M8.8 0.8L0.8 8.8" stroke="#eee" stroke-width="1.1"/><path d="M6.5 1L8.7 0.5" stroke="#fff" stroke-width="1.8"/></svg>
<svg style="left:1504.5px;top:450.56px;" width="9" height="9" viewBox="0 0 9 9"><rect x="0.5" y="0.5" width="8" height="8" fill="#8a8a8a" stroke="#d4d4d4"/></svg>
<svg style="left:1516.5px;top:450.56px;" width="9" height="9" viewBox="0 0 9 9"><rect x="0" y="0" width="9" height="9" fill="#111"/><polygon points="0,0 4.5,4.5 0,9" fill="#12b5e8"/><polygon points="0,0 9,0 4.5,4.5" fill="#e422b8"/><polygon points="9,0 9,9 4.5,4.5" fill="#f4e21a"/><polygon points="0,9 9,9 4.5,4.5" fill="#0a0a0a"/><rect x="0.25" y="0.25" width="8.5" height="8.5" fill="none" stroke="#ddd" stroke-width="0.5"/></svg>
<div style="left:1342px;top:476.58px;width:187px;height:1px;background:#383838"></div>
<div style="left:1342px;top:477.58px;width:187px;height:0.5px;background:#505050"></div>
<svg style="left:1343px;top:467.08px;" width="7" height="5" viewBox="0 0 7 5"><polygon points="0.3,0.5 6.7,0.5 3.5,4.5" fill="#e0e0e0"/></svg>
<svg style="left:1351.5px;top:464.58px;" width="11" height="10" viewBox="0 0 11 10"><path d="M0.5 1.5H4L5 3H10.5V9.5H0.5Z" fill="#c4c4c4" stroke="#dedede" stroke-width="0.6"/></svg>
<div class="t" style="left:1364.3px;top:467.47999999999996px;font-size:6.85px;color:#f0f0f0;-webkit-text-stroke:0.2px #f0f0f0">Bunt_Design</div>
<div style="left:1342px;top:491.6px;width:187px;height:1px;background:#383838"></div>
<div style="left:1342px;top:492.6px;width:187px;height:0.5px;background:#505050"></div>
<div style="left:1364.5px;top:480.3px;width:9.5px;height:9.5px;background:#edf0f4;border:1px solid #101010;border-radius:1.5px"></div>
<div class="t" style="left:1375.7px;top:482.5px;font-size:6.85px;color:#f0f0f0;-webkit-text-stroke:0.2px #f0f0f0">C=9 M=4 Y=4 K=0</div>
<svg style="left:1504.5px;top:480.6px;" width="9" height="9" viewBox="0 0 9 9"><rect x="0.5" y="0.5" width="8" height="8" fill="#8a8a8a" stroke="#d4d4d4"/></svg>
<svg style="left:1516.5px;top:480.6px;" width="9" height="9" viewBox="0 0 9 9"><rect x="0" y="0" width="9" height="9" fill="#111"/><polygon points="0,0 4.5,4.5 0,9" fill="#12b5e8"/><polygon points="0,0 9,0 4.5,4.5" fill="#e422b8"/><polygon points="9,0 9,9 4.5,4.5" fill="#f4e21a"/><polygon points="0,9 9,9 4.5,4.5" fill="#0a0a0a"/><rect x="0.25" y="0.25" width="8.5" height="8.5" fill="none" stroke="#ddd" stroke-width="0.5"/></svg>
<div style="left:1342px;top:492.62px;width:187px;height:14.5px;background:#45556f"></div>
<div style="left:1342px;top:506.62px;width:187px;height:1px;background:#383838"></div>
<div style="left:1342px;top:507.62px;width:187px;height:0.5px;background:#505050"></div>
<div style="left:1364.5px;top:495.32px;width:9.5px;height:9.5px;background:#262827;border:1px solid #101010;border-radius:1.5px"></div>
<div class="t" style="left:1375.7px;top:497.52px;font-size:6.85px;color:#ffffff;font-weight:bold;">C=75 M=65 Y=58 K=74</div>
<svg style="left:1504.5px;top:495.62px;" width="9" height="9" viewBox="0 0 9 9"><rect x="0.5" y="0.5" width="8" height="8" fill="#8a8a8a" stroke="#d4d4d4"/></svg>
<svg style="left:1516.5px;top:495.62px;" width="9" height="9" viewBox="0 0 9 9"><rect x="0" y="0" width="9" height="9" fill="#111"/><polygon points="0,0 4.5,4.5 0,9" fill="#12b5e8"/><polygon points="0,0 9,0 4.5,4.5" fill="#e422b8"/><polygon points="9,0 9,9 4.5,4.5" fill="#f4e21a"/><polygon points="0,9 9,9 4.5,4.5" fill="#0a0a0a"/><rect x="0.25" y="0.25" width="8.5" height="8.5" fill="none" stroke="#ddd" stroke-width="0.5"/></svg>
<div style="left:1342px;top:521.64px;width:187px;height:1px;background:#383838"></div>
<div style="left:1342px;top:522.64px;width:187px;height:0.5px;background:#505050"></div>
<div style="left:1364.5px;top:510.34px;width:9.5px;height:9.5px;background:#e3c4a0;border:1px solid #101010;border-radius:1.5px"></div>
<div class="t" style="left:1375.7px;top:512.54px;font-size:6.85px;color:#f0f0f0;-webkit-text-stroke:0.2px #f0f0f0">C=16 M=31 Y=45 K=4</div>
<svg style="left:1504.5px;top:510.64px;" width="9" height="9" viewBox="0 0 9 9"><rect x="0.5" y="0.5" width="8" height="8" fill="#8a8a8a" stroke="#d4d4d4"/></svg>
<svg style="left:1516.5px;top:510.64px;" width="9" height="9" viewBox="0 0 9 9"><rect x="0" y="0" width="9" height="9" fill="#111"/><polygon points="0,0 4.5,4.5 0,9" fill="#12b5e8"/><polygon points="0,0 9,0 4.5,4.5" fill="#e422b8"/><polygon points="9,0 9,9 4.5,4.5" fill="#f4e21a"/><polygon points="0,9 9,9 4.5,4.5" fill="#0a0a0a"/><rect x="0.25" y="0.25" width="8.5" height="8.5" fill="none" stroke="#ddd" stroke-width="0.5"/></svg>
<div style="left:1342px;top:536.66px;width:187px;height:1px;background:#383838"></div>
<div style="left:1342px;top:537.66px;width:187px;height:0.5px;background:#505050"></div>
<div style="left:1364.5px;top:525.36px;width:9.5px;height:9.5px;background:#7d5e4c;border:1px solid #101010;border-radius:1.5px"></div>
<div class="t" style="left:1375.7px;top:527.56px;font-size:6.85px;color:#f0f0f0;-webkit-text-stroke:0.2px #f0f0f0">C=40 M=53 Y=61 K=45</div>
<svg style="left:1504.5px;top:525.66px;" width="9" height="9" viewBox="0 0 9 9"><rect x="0.5" y="0.5" width="8" height="8" fill="#8a8a8a" stroke="#d4d4d4"/></svg>
<svg style="left:1516.5px;top:525.66px;" width="9" height="9" viewBox="0 0 9 9"><rect x="0" y="0" width="9" height="9" fill="#111"/><polygon points="0,0 4.5,4.5 0,9" fill="#12b5e8"/><polygon points="0,0 9,0 4.5,4.5" fill="#e422b8"/><polygon points="9,0 9,9 4.5,4.5" fill="#f4e21a"/><polygon points="0,9 9,9 4.5,4.5" fill="#0a0a0a"/><rect x="0.25" y="0.25" width="8.5" height="8.5" fill="none" stroke="#ddd" stroke-width="0.5"/></svg>
<div style="left:1342px;top:551.6800000000001px;width:187px;height:1px;background:#383838"></div>
<div style="left:1342px;top:552.6800000000001px;width:187px;height:0.5px;background:#505050"></div>
<div style="left:1364.5px;top:540.3800000000001px;width:9.5px;height:9.5px;background:#b08f89;border:1px solid #101010;border-radius:1.5px"></div>
<div class="t" style="left:1375.7px;top:542.58px;font-size:6.85px;color:#f0f0f0;-webkit-text-stroke:0.2px #f0f0f0">C=30 M=43 Y=44 K=20</div>
<svg style="left:1504.5px;top:540.6800000000001px;" width="9" height="9" viewBox="0 0 9 9"><rect x="0.5" y="0.5" width="8" height="8" fill="#8a8a8a" stroke="#d4d4d4"/></svg>
<svg style="left:1516.5px;top:540.6800000000001px;" width="9" height="9" viewBox="0 0 9 9"><rect x="0" y="0" width="9" height="9" fill="#111"/><polygon points="0,0 4.5,4.5 0,9" fill="#12b5e8"/><polygon points="0,0 9,0 4.5,4.5" fill="#e422b8"/><polygon points="9,0 9,9 4.5,4.5" fill="#f4e21a"/><polygon points="0,9 9,9 4.5,4.5" fill="#0a0a0a"/><rect x="0.25" y="0.25" width="8.5" height="8.5" fill="none" stroke="#ddd" stroke-width="0.5"/></svg>
<div style="left:1529px;top:402px;width:9px;height:316px;background:#363636;border-left:1px solid #2c2c2c"></div>
<svg style="left:1530px;top:404.5px;" width="8" height="6" viewBox="0 0 8 6"><polygon points="1,5 4,1.3 7,5" fill="#8a8a8a"/></svg>
<svg style="left:1530px;top:709.5px;" width="8" height="6" viewBox="0 0 8 6"><polygon points="1,1 4,4.7 7,1" fill="#c8c8c8"/></svg>
<div style="left:1342px;top:718px;width:196px;height:15px;background:#484848;border-top:1px solid #333"></div>
<svg style="left:1347.5px;top:720px;" width="13" height="10" viewBox="0 0 13 10"><path d="M3 9.5A2.7 2.7 0 0 1 3 4.2A3.6 3.6 0 0 1 9.8 3.8A2.9 2.9 0 0 1 10 9.5Z" fill="none" stroke="#e8e8e8" stroke-width="1.3"/><path d="M4 7H8M6.5 5.3L8.3 7L6.5 8.7" fill="none" stroke="#e8e8e8" stroke-width="1.1"/></svg>
<svg style="left:1441px;top:721px;" width="14" height="9" viewBox="0 0 14 9"><rect x="0.5" y="0.5" width="8" height="7.5" fill="#e0e0e0"/><path d="M3.2 0.5V8M5.9 0.5V8M0.5 3H8.5M0.5 5.5H8.5" stroke="#555" stroke-width="0.7"/><rect x="5.9" y="3" width="2.6" height="2.5" fill="#444"/><polygon points="10,6 13.5,6 11.7,8" fill="#ddd"/></svg>
<svg style="left:1465px;top:721px;" width="11" height="9" viewBox="0 0 11 9"><path d="M0.5 1H4L5 2.5H10V8.5H0.5Z" fill="#d4d4d4" stroke="#e4e4e4" stroke-width="0.6"/></svg>
<svg style="left:1488.5px;top:721px;" width="9" height="9" viewBox="0 0 9 9"><path d="M1 0.5H8.5V8.5H4L1 5.5Z" fill="#dcdcdc"/><path d="M1 5.5H4V8.5" fill="#777" stroke="#484848" stroke-width="0.7"/></svg>
<svg style="left:1510.5px;top:720.5px;" width="10" height="10" viewBox="0 0 10 10"><path d="M1.5 3.5H8.5L7.8 9.5H2.2Z" fill="none" stroke="#dcdcdc" stroke-width="1.1"/><path d="M0.5 2.5H9.5M3.5 2.5V1H6.5V2.5" fill="none" stroke="#dcdcdc" stroke-width="1"/><path d="M3.7 5V8.5M5 5V8.5M6.3 5V8.5" stroke="#bbb" stroke-width="0.7"/></svg>
<svg style="left:1528px;top:724px;" width="9" height="8" viewBox="0 0 9 8"><polygon points="8,0.5 8,7.5 1,7.5" fill="#404040"/></svg>
<div style="left:1342px;top:732.5px;width:196px;height:1px;background:#2c2c2c"></div>
<svg style="left:1432.5px;top:734px;" width="15" height="2" viewBox="0 0 15 2"><path d="M0 1H15" stroke="#222" stroke-width="1.6" stroke-dasharray="1.5 0.7"/></svg>
</div>
</body></html>
